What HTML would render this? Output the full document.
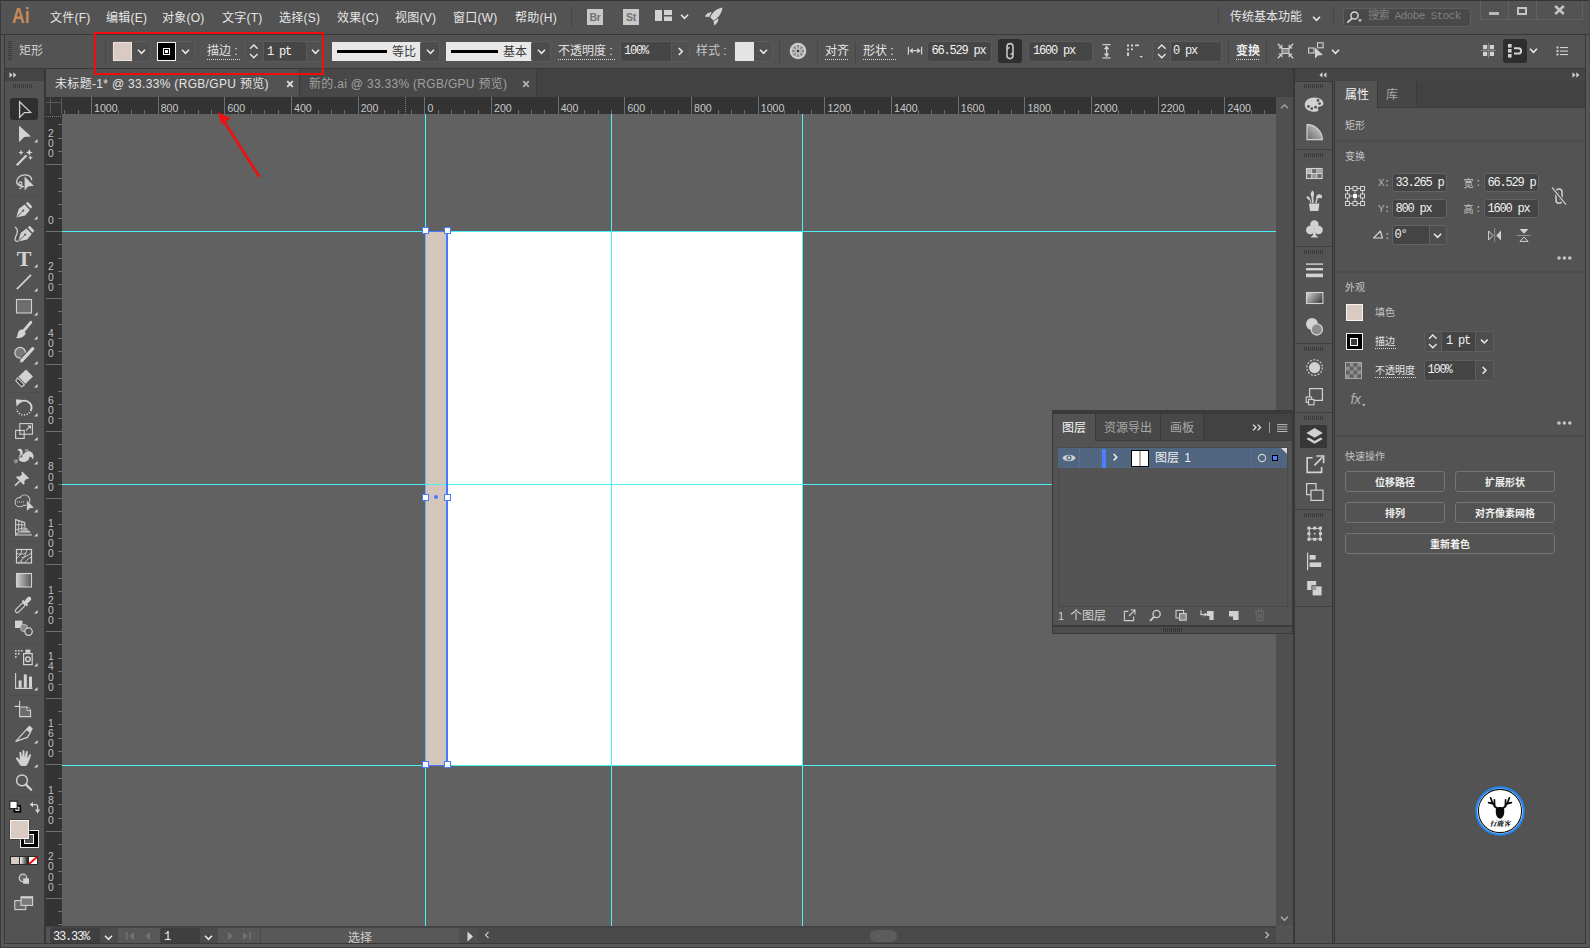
<!DOCTYPE html>
<html lang="zh-CN"><head><meta charset="utf-8"><title>Adobe Illustrator</title>
<style>
html,body{margin:0;padding:0;background:#575757;}
#app{position:relative;width:1590px;height:948px;overflow:hidden;font-family:'Liberation Sans','Noto Sans CJK SC',sans-serif;}
#app div,#app svg,#app span{position:absolute;}
#app svg{overflow:visible;}
</style></head><body><div id="app">
<div style="left:0px;top:0px;width:1590px;height:948px;background:#575757;"></div>
<div style="left:0px;top:0px;width:1590px;height:1px;background:#343434;"></div>
<div style="left:0px;top:0px;width:1px;height:948px;background:#3a3a3a;"></div>
<div style="left:0px;top:947px;width:1590px;height:1px;background:#3c3c3c;"></div>
<div style="left:1589px;top:0px;width:1px;height:948px;background:#4c4c4c;"></div>
<div style="left:1px;top:1px;width:1588px;height:33px;background:#535353;"></div>
<div style="left:1px;top:34px;width:1588px;height:1px;background:#383838;"></div>
<div style="left:5px;top:35px;width:1580px;height:33px;background:#535353;"></div>
<div style="left:4px;top:35px;width:1px;height:908px;background:#383838;"></div>
<div style="left:5px;top:68px;width:1580px;height:1px;background:#383838;"></div>
<div style="left:1585px;top:35px;width:1px;height:908px;background:#383838;"></div>
<div style="left:4px;top:943px;width:1582px;height:1px;background:#383838;"></div>
<div style="left:46px;top:69px;width:1247px;height:28px;background:#424242;"></div>
<div style="left:46px;top:69px;width:253px;height:28px;background:#535353;"></div>
<div style="left:299px;top:69px;width:1px;height:28px;background:#3a3a3a;"></div>
<div style="left:300px;top:69px;width:236px;height:28px;background:#484848;"></div>
<div style="left:536px;top:69px;width:1px;height:28px;background:#3a3a3a;"></div>
<span style="left:55px;top:75.50px;font:12px/16px 'Liberation Sans','Noto Sans CJK SC',sans-serif;color:#e4e4e4;white-space:pre;letter-spacing:0.32px;">未标题-1* @ 33.33% (RGB/GPU 预览)</span>
<span style="left:309px;top:75.50px;font:12px/16px 'Liberation Sans','Noto Sans CJK SC',sans-serif;color:#a0a0a0;white-space:pre;letter-spacing:0.3px;">新的.ai @ 33.33% (RGB/GPU 预览)</span>
<svg style="left:285.5px;top:79.5px;" width="8" height="8" viewBox="0 0 8 8"><path d="M1.2 1.2 L6.8 6.8 M6.8 1.2 L1.2 6.8" stroke="#e0e0e0" stroke-width="1.8"/></svg>
<svg style="left:522px;top:79.5px;" width="8" height="8" viewBox="0 0 8 8"><path d="M1.2 1.2 L6.8 6.8 M6.8 1.2 L1.2 6.8" stroke="#b0b0b0" stroke-width="1.8"/></svg>
<div style="left:46px;top:97px;width:1230px;height:17px;background:#333333;"></div>
<div style="left:46px;top:97px;width:16px;height:830px;background:#333333;"></div>
<div style="left:62px;top:114px;width:1214px;height:812px;background:#616161;"></div>
<svg style="left:46px;top:97px;" width="1230" height="17" viewBox="0 0 1230 17"><rect x="18" y="13" width="1" height="4" fill="#707070"/><rect x="32" y="13" width="1" height="4" fill="#707070"/><rect x="45" y="0" width="1" height="17" fill="#707070"/><text x="48.06" y="14.8" font-family="Liberation Sans,sans-serif" font-size="10.6" fill="#c8c8c8">1000</text><rect x="58" y="13" width="1" height="4" fill="#707070"/><rect x="72" y="13" width="1" height="4" fill="#707070"/><rect x="85" y="13" width="1" height="4" fill="#707070"/><rect x="98" y="13" width="1" height="4" fill="#707070"/><rect x="112" y="0" width="1" height="17" fill="#707070"/><text x="114.73" y="14.8" font-family="Liberation Sans,sans-serif" font-size="10.6" fill="#c8c8c8">800</text><rect x="125" y="13" width="1" height="4" fill="#707070"/><rect x="138" y="13" width="1" height="4" fill="#707070"/><rect x="152" y="13" width="1" height="4" fill="#707070"/><rect x="165" y="13" width="1" height="4" fill="#707070"/><rect x="178" y="0" width="1" height="17" fill="#707070"/><text x="181.40" y="14.8" font-family="Liberation Sans,sans-serif" font-size="10.6" fill="#c8c8c8">600</text><rect x="192" y="13" width="1" height="4" fill="#707070"/><rect x="205" y="13" width="1" height="4" fill="#707070"/><rect x="218" y="13" width="1" height="4" fill="#707070"/><rect x="232" y="13" width="1" height="4" fill="#707070"/><rect x="245" y="0" width="1" height="17" fill="#707070"/><text x="248.07" y="14.8" font-family="Liberation Sans,sans-serif" font-size="10.6" fill="#c8c8c8">400</text><rect x="258" y="13" width="1" height="4" fill="#707070"/><rect x="272" y="13" width="1" height="4" fill="#707070"/><rect x="285" y="13" width="1" height="4" fill="#707070"/><rect x="298" y="13" width="1" height="4" fill="#707070"/><rect x="312" y="0" width="1" height="17" fill="#707070"/><text x="314.73" y="14.8" font-family="Liberation Sans,sans-serif" font-size="10.6" fill="#c8c8c8">200</text><rect x="325" y="13" width="1" height="4" fill="#707070"/><rect x="338" y="13" width="1" height="4" fill="#707070"/><rect x="352" y="13" width="1" height="4" fill="#707070"/><rect x="365" y="13" width="1" height="4" fill="#707070"/><rect x="378" y="0" width="1" height="17" fill="#707070"/><text x="381.40" y="14.8" font-family="Liberation Sans,sans-serif" font-size="10.6" fill="#c8c8c8">0</text><rect x="392" y="13" width="1" height="4" fill="#707070"/><rect x="405" y="13" width="1" height="4" fill="#707070"/><rect x="418" y="13" width="1" height="4" fill="#707070"/><rect x="432" y="13" width="1" height="4" fill="#707070"/><rect x="445" y="0" width="1" height="17" fill="#707070"/><text x="448.07" y="14.8" font-family="Liberation Sans,sans-serif" font-size="10.6" fill="#c8c8c8">200</text><rect x="458" y="13" width="1" height="4" fill="#707070"/><rect x="472" y="13" width="1" height="4" fill="#707070"/><rect x="485" y="13" width="1" height="4" fill="#707070"/><rect x="498" y="13" width="1" height="4" fill="#707070"/><rect x="512" y="0" width="1" height="17" fill="#707070"/><text x="514.73" y="14.8" font-family="Liberation Sans,sans-serif" font-size="10.6" fill="#c8c8c8">400</text><rect x="525" y="13" width="1" height="4" fill="#707070"/><rect x="538" y="13" width="1" height="4" fill="#707070"/><rect x="552" y="13" width="1" height="4" fill="#707070"/><rect x="565" y="13" width="1" height="4" fill="#707070"/><rect x="578" y="0" width="1" height="17" fill="#707070"/><text x="581.40" y="14.8" font-family="Liberation Sans,sans-serif" font-size="10.6" fill="#c8c8c8">600</text><rect x="592" y="13" width="1" height="4" fill="#707070"/><rect x="605" y="13" width="1" height="4" fill="#707070"/><rect x="618" y="13" width="1" height="4" fill="#707070"/><rect x="632" y="13" width="1" height="4" fill="#707070"/><rect x="645" y="0" width="1" height="17" fill="#707070"/><text x="648.07" y="14.8" font-family="Liberation Sans,sans-serif" font-size="10.6" fill="#c8c8c8">800</text><rect x="658" y="13" width="1" height="4" fill="#707070"/><rect x="672" y="13" width="1" height="4" fill="#707070"/><rect x="685" y="13" width="1" height="4" fill="#707070"/><rect x="698" y="13" width="1" height="4" fill="#707070"/><rect x="712" y="0" width="1" height="17" fill="#707070"/><text x="714.74" y="14.8" font-family="Liberation Sans,sans-serif" font-size="10.6" fill="#c8c8c8">1000</text><rect x="725" y="13" width="1" height="4" fill="#707070"/><rect x="738" y="13" width="1" height="4" fill="#707070"/><rect x="752" y="13" width="1" height="4" fill="#707070"/><rect x="765" y="13" width="1" height="4" fill="#707070"/><rect x="778" y="0" width="1" height="17" fill="#707070"/><text x="781.40" y="14.8" font-family="Liberation Sans,sans-serif" font-size="10.6" fill="#c8c8c8">1200</text><rect x="792" y="13" width="1" height="4" fill="#707070"/><rect x="805" y="13" width="1" height="4" fill="#707070"/><rect x="818" y="13" width="1" height="4" fill="#707070"/><rect x="832" y="13" width="1" height="4" fill="#707070"/><rect x="845" y="0" width="1" height="17" fill="#707070"/><text x="848.07" y="14.8" font-family="Liberation Sans,sans-serif" font-size="10.6" fill="#c8c8c8">1400</text><rect x="858" y="13" width="1" height="4" fill="#707070"/><rect x="872" y="13" width="1" height="4" fill="#707070"/><rect x="885" y="13" width="1" height="4" fill="#707070"/><rect x="898" y="13" width="1" height="4" fill="#707070"/><rect x="912" y="0" width="1" height="17" fill="#707070"/><text x="914.74" y="14.8" font-family="Liberation Sans,sans-serif" font-size="10.6" fill="#c8c8c8">1600</text><rect x="925" y="13" width="1" height="4" fill="#707070"/><rect x="938" y="13" width="1" height="4" fill="#707070"/><rect x="952" y="13" width="1" height="4" fill="#707070"/><rect x="965" y="13" width="1" height="4" fill="#707070"/><rect x="978" y="0" width="1" height="17" fill="#707070"/><text x="981.40" y="14.8" font-family="Liberation Sans,sans-serif" font-size="10.6" fill="#c8c8c8">1800</text><rect x="992" y="13" width="1" height="4" fill="#707070"/><rect x="1005" y="13" width="1" height="4" fill="#707070"/><rect x="1018" y="13" width="1" height="4" fill="#707070"/><rect x="1032" y="13" width="1" height="4" fill="#707070"/><rect x="1045" y="0" width="1" height="17" fill="#707070"/><text x="1048.07" y="14.8" font-family="Liberation Sans,sans-serif" font-size="10.6" fill="#c8c8c8">2000</text><rect x="1058" y="13" width="1" height="4" fill="#707070"/><rect x="1072" y="13" width="1" height="4" fill="#707070"/><rect x="1085" y="13" width="1" height="4" fill="#707070"/><rect x="1098" y="13" width="1" height="4" fill="#707070"/><rect x="1112" y="0" width="1" height="17" fill="#707070"/><text x="1114.74" y="14.8" font-family="Liberation Sans,sans-serif" font-size="10.6" fill="#c8c8c8">2200</text><rect x="1125" y="13" width="1" height="4" fill="#707070"/><rect x="1138" y="13" width="1" height="4" fill="#707070"/><rect x="1152" y="13" width="1" height="4" fill="#707070"/><rect x="1165" y="13" width="1" height="4" fill="#707070"/><rect x="1178" y="0" width="1" height="17" fill="#707070"/><text x="1181.40" y="14.8" font-family="Liberation Sans,sans-serif" font-size="10.6" fill="#c8c8c8">2400</text><rect x="1192" y="13" width="1" height="4" fill="#707070"/><rect x="1205" y="13" width="1" height="4" fill="#707070"/><rect x="1218" y="13" width="1" height="4" fill="#707070"/><rect x="4" y="1" width="1" height="16" fill="#585858"/><rect x="15" y="1" width="1" height="16" fill="#585858"/><rect x="0" y="5" width="16" height="1" fill="#585858"/><path d="M359.5 0 V17" stroke="#7c7c7c" stroke-width="1" stroke-dasharray="1 1"/></svg>
<svg style="left:46px;top:114px;" width="16" height="813" viewBox="0 0 16 813"><rect x="12" y="10" width="4" height="1" fill="#707070"/><rect x="12" y="24" width="4" height="1" fill="#707070"/><rect x="12" y="37" width="4" height="1" fill="#707070"/><rect x="0" y="50" width="16" height="1" fill="#707070"/><text x="4.8" y="23.03" text-anchor="middle" font-family="Liberation Sans,sans-serif" font-size="10.3" fill="#c0c0c0">2</text><text x="4.8" y="33.23" text-anchor="middle" font-family="Liberation Sans,sans-serif" font-size="10.3" fill="#c0c0c0">0</text><text x="4.8" y="43.43" text-anchor="middle" font-family="Liberation Sans,sans-serif" font-size="10.3" fill="#c0c0c0">0</text><rect x="12" y="64" width="4" height="1" fill="#707070"/><rect x="12" y="77" width="4" height="1" fill="#707070"/><rect x="12" y="90" width="4" height="1" fill="#707070"/><rect x="12" y="104" width="4" height="1" fill="#707070"/><rect x="0" y="117" width="16" height="1" fill="#707070"/><text x="4.8" y="110.10" text-anchor="middle" font-family="Liberation Sans,sans-serif" font-size="10.3" fill="#c0c0c0">0</text><rect x="12" y="130" width="4" height="1" fill="#707070"/><rect x="12" y="144" width="4" height="1" fill="#707070"/><rect x="12" y="157" width="4" height="1" fill="#707070"/><rect x="12" y="170" width="4" height="1" fill="#707070"/><rect x="0" y="184" width="16" height="1" fill="#707070"/><text x="4.8" y="156.37" text-anchor="middle" font-family="Liberation Sans,sans-serif" font-size="10.3" fill="#c0c0c0">2</text><text x="4.8" y="166.57" text-anchor="middle" font-family="Liberation Sans,sans-serif" font-size="10.3" fill="#c0c0c0">0</text><text x="4.8" y="176.77" text-anchor="middle" font-family="Liberation Sans,sans-serif" font-size="10.3" fill="#c0c0c0">0</text><rect x="12" y="197" width="4" height="1" fill="#707070"/><rect x="12" y="210" width="4" height="1" fill="#707070"/><rect x="12" y="224" width="4" height="1" fill="#707070"/><rect x="12" y="237" width="4" height="1" fill="#707070"/><rect x="0" y="250" width="16" height="1" fill="#707070"/><text x="4.8" y="223.03" text-anchor="middle" font-family="Liberation Sans,sans-serif" font-size="10.3" fill="#c0c0c0">4</text><text x="4.8" y="233.23" text-anchor="middle" font-family="Liberation Sans,sans-serif" font-size="10.3" fill="#c0c0c0">0</text><text x="4.8" y="243.43" text-anchor="middle" font-family="Liberation Sans,sans-serif" font-size="10.3" fill="#c0c0c0">0</text><rect x="12" y="264" width="4" height="1" fill="#707070"/><rect x="12" y="277" width="4" height="1" fill="#707070"/><rect x="12" y="290" width="4" height="1" fill="#707070"/><rect x="12" y="304" width="4" height="1" fill="#707070"/><rect x="0" y="317" width="16" height="1" fill="#707070"/><text x="4.8" y="289.70" text-anchor="middle" font-family="Liberation Sans,sans-serif" font-size="10.3" fill="#c0c0c0">6</text><text x="4.8" y="299.90" text-anchor="middle" font-family="Liberation Sans,sans-serif" font-size="10.3" fill="#c0c0c0">0</text><text x="4.8" y="310.10" text-anchor="middle" font-family="Liberation Sans,sans-serif" font-size="10.3" fill="#c0c0c0">0</text><rect x="12" y="330" width="4" height="1" fill="#707070"/><rect x="12" y="344" width="4" height="1" fill="#707070"/><rect x="12" y="357" width="4" height="1" fill="#707070"/><rect x="12" y="370" width="4" height="1" fill="#707070"/><rect x="0" y="384" width="16" height="1" fill="#707070"/><text x="4.8" y="356.37" text-anchor="middle" font-family="Liberation Sans,sans-serif" font-size="10.3" fill="#c0c0c0">8</text><text x="4.8" y="366.57" text-anchor="middle" font-family="Liberation Sans,sans-serif" font-size="10.3" fill="#c0c0c0">0</text><text x="4.8" y="376.77" text-anchor="middle" font-family="Liberation Sans,sans-serif" font-size="10.3" fill="#c0c0c0">0</text><rect x="12" y="397" width="4" height="1" fill="#707070"/><rect x="12" y="410" width="4" height="1" fill="#707070"/><rect x="12" y="424" width="4" height="1" fill="#707070"/><rect x="12" y="437" width="4" height="1" fill="#707070"/><rect x="0" y="450" width="16" height="1" fill="#707070"/><text x="4.8" y="412.84" text-anchor="middle" font-family="Liberation Sans,sans-serif" font-size="10.3" fill="#c0c0c0">1</text><text x="4.8" y="423.04" text-anchor="middle" font-family="Liberation Sans,sans-serif" font-size="10.3" fill="#c0c0c0">0</text><text x="4.8" y="433.24" text-anchor="middle" font-family="Liberation Sans,sans-serif" font-size="10.3" fill="#c0c0c0">0</text><text x="4.8" y="443.44" text-anchor="middle" font-family="Liberation Sans,sans-serif" font-size="10.3" fill="#c0c0c0">0</text><rect x="12" y="464" width="4" height="1" fill="#707070"/><rect x="12" y="477" width="4" height="1" fill="#707070"/><rect x="12" y="490" width="4" height="1" fill="#707070"/><rect x="12" y="504" width="4" height="1" fill="#707070"/><rect x="0" y="517" width="16" height="1" fill="#707070"/><text x="4.8" y="479.50" text-anchor="middle" font-family="Liberation Sans,sans-serif" font-size="10.3" fill="#c0c0c0">1</text><text x="4.8" y="489.70" text-anchor="middle" font-family="Liberation Sans,sans-serif" font-size="10.3" fill="#c0c0c0">2</text><text x="4.8" y="499.90" text-anchor="middle" font-family="Liberation Sans,sans-serif" font-size="10.3" fill="#c0c0c0">0</text><text x="4.8" y="510.10" text-anchor="middle" font-family="Liberation Sans,sans-serif" font-size="10.3" fill="#c0c0c0">0</text><rect x="12" y="530" width="4" height="1" fill="#707070"/><rect x="12" y="544" width="4" height="1" fill="#707070"/><rect x="12" y="557" width="4" height="1" fill="#707070"/><rect x="12" y="570" width="4" height="1" fill="#707070"/><rect x="0" y="584" width="16" height="1" fill="#707070"/><text x="4.8" y="546.17" text-anchor="middle" font-family="Liberation Sans,sans-serif" font-size="10.3" fill="#c0c0c0">1</text><text x="4.8" y="556.37" text-anchor="middle" font-family="Liberation Sans,sans-serif" font-size="10.3" fill="#c0c0c0">4</text><text x="4.8" y="566.57" text-anchor="middle" font-family="Liberation Sans,sans-serif" font-size="10.3" fill="#c0c0c0">0</text><text x="4.8" y="576.77" text-anchor="middle" font-family="Liberation Sans,sans-serif" font-size="10.3" fill="#c0c0c0">0</text><rect x="12" y="597" width="4" height="1" fill="#707070"/><rect x="12" y="610" width="4" height="1" fill="#707070"/><rect x="12" y="624" width="4" height="1" fill="#707070"/><rect x="12" y="637" width="4" height="1" fill="#707070"/><rect x="0" y="650" width="16" height="1" fill="#707070"/><text x="4.8" y="612.84" text-anchor="middle" font-family="Liberation Sans,sans-serif" font-size="10.3" fill="#c0c0c0">1</text><text x="4.8" y="623.04" text-anchor="middle" font-family="Liberation Sans,sans-serif" font-size="10.3" fill="#c0c0c0">6</text><text x="4.8" y="633.24" text-anchor="middle" font-family="Liberation Sans,sans-serif" font-size="10.3" fill="#c0c0c0">0</text><text x="4.8" y="643.44" text-anchor="middle" font-family="Liberation Sans,sans-serif" font-size="10.3" fill="#c0c0c0">0</text><rect x="12" y="664" width="4" height="1" fill="#707070"/><rect x="12" y="677" width="4" height="1" fill="#707070"/><rect x="12" y="690" width="4" height="1" fill="#707070"/><rect x="12" y="704" width="4" height="1" fill="#707070"/><rect x="0" y="717" width="16" height="1" fill="#707070"/><text x="4.8" y="679.50" text-anchor="middle" font-family="Liberation Sans,sans-serif" font-size="10.3" fill="#c0c0c0">1</text><text x="4.8" y="689.70" text-anchor="middle" font-family="Liberation Sans,sans-serif" font-size="10.3" fill="#c0c0c0">8</text><text x="4.8" y="699.90" text-anchor="middle" font-family="Liberation Sans,sans-serif" font-size="10.3" fill="#c0c0c0">0</text><text x="4.8" y="710.10" text-anchor="middle" font-family="Liberation Sans,sans-serif" font-size="10.3" fill="#c0c0c0">0</text><rect x="12" y="730" width="4" height="1" fill="#707070"/><rect x="12" y="744" width="4" height="1" fill="#707070"/><rect x="12" y="757" width="4" height="1" fill="#707070"/><rect x="12" y="770" width="4" height="1" fill="#707070"/><rect x="0" y="784" width="16" height="1" fill="#707070"/><text x="4.8" y="746.17" text-anchor="middle" font-family="Liberation Sans,sans-serif" font-size="10.3" fill="#c0c0c0">2</text><text x="4.8" y="756.37" text-anchor="middle" font-family="Liberation Sans,sans-serif" font-size="10.3" fill="#c0c0c0">0</text><text x="4.8" y="766.57" text-anchor="middle" font-family="Liberation Sans,sans-serif" font-size="10.3" fill="#c0c0c0">0</text><text x="4.8" y="776.77" text-anchor="middle" font-family="Liberation Sans,sans-serif" font-size="10.3" fill="#c0c0c0">0</text><rect x="12" y="797" width="4" height="1" fill="#707070"/><rect x="12" y="810" width="4" height="1" fill="#707070"/><path d="M0 2.5 H16" stroke="#7c7c7c" stroke-width="1" stroke-dasharray="1 1"/></svg>
<div style="left:425px;top:231px;width:377px;height:534px;background:#ffffff;"></div>
<div style="left:425px;top:231px;width:22px;height:534px;background:#d5c6bc;"></div>
<div style="left:425px;top:114px;width:1px;height:812px;background:#4cf1f6;"></div>
<div style="left:611px;top:114px;width:1px;height:812px;background:#4cf1f6;"></div>
<div style="left:802px;top:114px;width:1px;height:812px;background:#4cf1f6;"></div>
<div style="left:62px;top:231px;width:1214px;height:1px;background:#4cf1f6;"></div>
<div style="left:62px;top:484px;width:1214px;height:1px;background:#4cf1f6;"></div>
<div style="left:62px;top:765px;width:1214px;height:1px;background:#4cf1f6;"></div>
<div style="left:424.5px;top:230.5px;width:23px;height:535px;background:transparent;box-sizing:border-box;border:1px solid #4a78ff;border-left-color:#66b6ff;"></div>
<div style="left:446px;top:231px;width:2px;height:534px;background:#4a78ff;"></div>
<div style="left:422.0px;top:227.0px;width:7px;height:7px;background:#ffffff;box-sizing:border-box;border:1px solid #4a78ff;"></div>
<div style="left:422.0px;top:493.5px;width:7px;height:7px;background:#ffffff;box-sizing:border-box;border:1px solid #4a78ff;"></div>
<div style="left:422.0px;top:761.0px;width:7px;height:7px;background:#ffffff;box-sizing:border-box;border:1px solid #4a78ff;"></div>
<div style="left:443.5px;top:227.0px;width:7px;height:7px;background:#ffffff;box-sizing:border-box;border:1px solid #4a78ff;"></div>
<div style="left:443.5px;top:493.5px;width:7px;height:7px;background:#ffffff;box-sizing:border-box;border:1px solid #4a78ff;"></div>
<div style="left:443.5px;top:761.0px;width:7px;height:7px;background:#ffffff;box-sizing:border-box;border:1px solid #4a78ff;"></div>
<div style="left:433.5px;top:495px;width:4px;height:4px;background:#4a78ff;border-radius:2px;"></div>
<div style="left:1276px;top:97px;width:17px;height:830px;background:#4f4f4f;"></div>
<svg style="left:1280.0px;top:103.0px;" width="9.0" height="7.0" viewBox="0 0 9.0 7.0"><path d="M1 5.25 L4.5 1.75 L8.0 5.25" fill="none" stroke="#a2a2a2" stroke-width="1.3"/></svg>
<svg style="left:1280.0px;top:914.5px;" width="9.0" height="7.0" viewBox="0 0 9.0 7.0"><path d="M1 1.75 L4.5 5.25 L8.0 1.75" fill="none" stroke="#b0b0b0" stroke-width="1.3"/></svg>
<div style="left:1293px;top:69px;width:2px;height:874px;background:#383838;"></div>
<div style="left:46px;top:926px;width:1247px;height:17px;background:#585858;"></div>
<div style="left:46px;top:926px;width:1230px;height:1.5px;background:#444;"></div>
<div style="left:46px;top:927px;width:4px;height:16px;background:#535353;"></div>
<div style="left:50px;top:928px;width:50px;height:15px;background:#3f3f3f;border-radius:2px 0 0 2px;"></div>
<span style="left:53px;top:928.50px;font:12px/16px 'Liberation Mono','Noto Sans CJK SC',monospace;color:#f0f0f0;white-space:pre;letter-spacing:-1.2px;">33.33%</span>
<div style="left:100px;top:928px;width:18px;height:15px;background:#4b4b4b;"></div>
<svg style="left:104.0px;top:933.5px;" width="9.0" height="7.0" viewBox="0 0 9.0 7.0"><path d="M1 1.75 L4.5 5.25 L8.0 1.75" fill="none" stroke="#e6e6e6" stroke-width="1.6"/></svg>
<div style="left:160px;top:928px;width:40px;height:15px;background:#3f3f3f;border-radius:2px 0 0 2px;"></div>
<span style="left:164px;top:928.50px;font:12px/16px 'Liberation Mono','Noto Sans CJK SC',monospace;color:#f0f0f0;white-space:pre;">1</span>
<div style="left:200px;top:928px;width:18px;height:15px;background:#4b4b4b;"></div>
<svg style="left:204.0px;top:933.5px;" width="9.0" height="7.0" viewBox="0 0 9.0 7.0"><path d="M1 1.75 L4.5 5.25 L8.0 1.75" fill="none" stroke="#e6e6e6" stroke-width="1.6"/></svg>
<svg style="left:125px;top:931px;" width="12" height="10" viewBox="0 0 12 10"><rect x="1" y="1" width="1.5" height="8" fill="#727272"/><path d="M9 1 L4 5 L9 9 Z" fill="#727272"/></svg>
<svg style="left:143px;top:931px;" width="10" height="10" viewBox="0 0 10 10"><path d="M7 1 L2 5 L7 9 Z" fill="#727272"/></svg>
<svg style="left:225px;top:931px;" width="10" height="10" viewBox="0 0 10 10"><path d="M3 1 L8 5 L3 9 Z" fill="#727272"/></svg>
<svg style="left:241px;top:931px;" width="12" height="10" viewBox="0 0 12 10"><path d="M2 1 L7 5 L2 9 Z" fill="#727272"/><rect x="8.5" y="1" width="1.5" height="8" fill="#727272"/></svg>
<div style="left:260px;top:928px;width:1px;height:15px;background:#4a4a4a;"></div>
<span style="left:348px;top:929.50px;font:12px/16px 'Liberation Sans','Noto Sans CJK SC',sans-serif;color:#d0d0d0;white-space:pre;">选择</span>
<div style="left:459px;top:928px;width:19px;height:15px;background:#4f4f4f;"></div>
<svg style="left:464.5px;top:930.5px;" width="10" height="11" viewBox="0 0 10 11"><path d="M2.5 0.5 L8 5.5 L2.5 10.5 Z" fill="#d8d8d8"/></svg>
<div style="left:478px;top:927.5px;width:798px;height:15.5px;background:#4a4a4a;"></div>
<svg style="left:483.5px;top:931px;" width="6" height="8" viewBox="0 0 6 8"><path d="M4.50 1 L1.50 4 L4.50 7" fill="none" stroke="#bdbdbd" stroke-width="1.3"/></svg>
<svg style="left:1264px;top:931px;" width="6" height="8" viewBox="0 0 6 8"><path d="M1.50 1 L4.50 4 L1.50 7" fill="none" stroke="#bdbdbd" stroke-width="1.3"/></svg>
<div style="left:870px;top:929.5px;width:27px;height:12px;background:#5c5c5c;border-radius:6px;"></div>
<div style="left:1276px;top:927px;width:17px;height:16px;background:#535353;"></div>
<span style="left:12.4px;top:2.90px;font:22px/26px 'Liberation Sans','Noto Sans CJK SC',sans-serif;color:#c48a5a;white-space:pre;font-weight:bold;transform:scaleX(0.8);transform-origin:0 50%;">Ai</span>
<span style="left:50px;top:10.00px;font:12px/16px 'Liberation Sans','Noto Sans CJK SC',sans-serif;color:#e6e6e6;white-space:pre;letter-spacing:0.25px;">文件(F)</span>
<span style="left:106px;top:10.00px;font:12px/16px 'Liberation Sans','Noto Sans CJK SC',sans-serif;color:#e6e6e6;white-space:pre;letter-spacing:0.25px;">编辑(E)</span>
<span style="left:162px;top:10.00px;font:12px/16px 'Liberation Sans','Noto Sans CJK SC',sans-serif;color:#e6e6e6;white-space:pre;letter-spacing:0.25px;">对象(O)</span>
<span style="left:222px;top:10.00px;font:12px/16px 'Liberation Sans','Noto Sans CJK SC',sans-serif;color:#e6e6e6;white-space:pre;letter-spacing:0.25px;">文字(T)</span>
<span style="left:279px;top:10.00px;font:12px/16px 'Liberation Sans','Noto Sans CJK SC',sans-serif;color:#e6e6e6;white-space:pre;letter-spacing:0.25px;">选择(S)</span>
<span style="left:337px;top:10.00px;font:12px/16px 'Liberation Sans','Noto Sans CJK SC',sans-serif;color:#e6e6e6;white-space:pre;letter-spacing:0.25px;">效果(C)</span>
<span style="left:395px;top:10.00px;font:12px/16px 'Liberation Sans','Noto Sans CJK SC',sans-serif;color:#e6e6e6;white-space:pre;letter-spacing:0.25px;">视图(V)</span>
<span style="left:453px;top:10.00px;font:12px/16px 'Liberation Sans','Noto Sans CJK SC',sans-serif;color:#e6e6e6;white-space:pre;letter-spacing:0.25px;">窗口(W)</span>
<span style="left:515px;top:10.00px;font:12px/16px 'Liberation Sans','Noto Sans CJK SC',sans-serif;color:#e6e6e6;white-space:pre;letter-spacing:0.25px;">帮助(H)</span>
<div style="left:571px;top:7px;width:1px;height:20px;background:#474747;"></div>
<div style="left:587px;top:9px;width:16px;height:16px;background:#c9c9c9;"></div>
<span style="left:587px;top:10.25px;font:10.5px/14.5px 'Liberation Sans','Noto Sans CJK SC',sans-serif;color:#727272;white-space:pre;width:16px;text-align:center;font-weight:bold;letter-spacing:-0.3px;">Br</span>
<div style="left:623px;top:9px;width:16px;height:16px;background:#c9c9c9;"></div>
<span style="left:623px;top:10.25px;font:10.5px/14.5px 'Liberation Sans','Noto Sans CJK SC',sans-serif;color:#727272;white-space:pre;width:16px;text-align:center;font-weight:bold;letter-spacing:-0.3px;">St</span>
<svg style="left:655px;top:10px;" width="18" height="12" viewBox="0 0 18 12"><rect x="0" y="0" width="7" height="11" fill="#d2d2d2"/><rect x="9" y="0" width="8" height="5" fill="#d2d2d2"/><rect x="9" y="6.5" width="8" height="4.5" fill="#d2d2d2"/></svg>
<svg style="left:680.0px;top:12.5px;" width="9.0" height="7.0" viewBox="0 0 9.0 7.0"><path d="M1 1.75 L4.5 5.25 L8.0 1.75" fill="none" stroke="#e6e6e6" stroke-width="1.6"/></svg>
<svg style="left:704px;top:7px;" width="20" height="19" viewBox="0 0 20 19"><path d="M18.6 0.6 C13 1.6 8.6 5 6.2 10.2 L9.4 13.6 C14.4 11 17.8 6.4 18.6 0.6 Z" fill="#d2d2d2"/><path d="M7.8 5.2 C5 5 2.4 6.6 0.8 9.4 L5 10 Z" fill="#d2d2d2"/><path d="M14.4 11.2 C14.6 14 13 16.6 10.2 18.4 L9.6 14.2 Z" fill="#d2d2d2"/></svg>
<div style="left:1218px;top:7px;width:1px;height:20px;background:#474747;"></div>
<span style="left:1230px;top:8.50px;font:12px/16px 'Liberation Sans','Noto Sans CJK SC',sans-serif;color:#e6e6e6;white-space:pre;">传统基本功能</span>
<svg style="left:1311.5px;top:14.5px;" width="9.0" height="7.0" viewBox="0 0 9.0 7.0"><path d="M1 1.75 L4.5 5.25 L8.0 1.75" fill="none" stroke="#e6e6e6" stroke-width="1.6"/></svg>
<div style="left:1333px;top:7px;width:1px;height:20px;background:#474747;"></div>
<div style="left:1343px;top:8px;width:128px;height:19px;background:#494949;box-sizing:border-box;border:1px solid #5e5e5e;border-radius:3px;"></div>
<svg style="left:1346px;top:10px;" width="18" height="15" viewBox="0 0 18 15"><circle cx="8.5" cy="5.5" r="3.6" fill="none" stroke="#d6d6d6" stroke-width="1.5"/><path d="M6 8.3 L1.3 12.6" stroke="#d6d6d6" stroke-width="1.7"/><path d="M11.8 9.5 h4.4 l-2.2 2.4 z" fill="#d6d6d6"/></svg>
<span style="left:1368px;top:9.00px;font:11px/15px 'Liberation Mono','Noto Sans CJK SC',monospace;color:#808080;white-space:pre;letter-spacing:-0.6px;">搜索 Adobe Stock</span>
<div style="left:1480px;top:1px;width:103px;height:19px;background:transparent;box-sizing:border-box;border:1px solid #606060;border-top:none;"></div>
<div style="left:1508px;top:1px;width:1px;height:18px;background:#606060;"></div>
<div style="left:1536px;top:1px;width:1px;height:18px;background:#606060;"></div>
<div style="left:1489px;top:11.5px;width:10px;height:3px;background:#b8b8b8;"></div>
<div style="left:1517px;top:7px;width:10px;height:8px;background:transparent;box-sizing:border-box;border:2px solid #c4c4c4;"></div>
<svg style="left:1554px;top:5px;" width="11" height="10" viewBox="0 0 11 10"><path d="M1.2 1 L9.8 9 M9.8 1 L1.2 9" stroke="#c4c4c4" stroke-width="2.4"/></svg>
<svg style="left:8px;top:41px;" width="4" height="20" viewBox="0 0 4 20"><rect x="0" y="0" width="4" height="1" fill="#3c3c3c"/><rect x="0" y="2" width="4" height="1" fill="#3c3c3c"/><rect x="0" y="4" width="4" height="1" fill="#3c3c3c"/><rect x="0" y="6" width="4" height="1" fill="#3c3c3c"/><rect x="0" y="8" width="4" height="1" fill="#3c3c3c"/><rect x="0" y="10" width="4" height="1" fill="#3c3c3c"/><rect x="0" y="12" width="4" height="1" fill="#3c3c3c"/><rect x="0" y="14" width="4" height="1" fill="#3c3c3c"/><rect x="0" y="16" width="4" height="1" fill="#3c3c3c"/><rect x="0" y="18" width="4" height="1" fill="#3c3c3c"/></svg>
<span style="left:19px;top:43.00px;font:12px/16px 'Liberation Sans','Noto Sans CJK SC',sans-serif;color:#d2d2d2;white-space:pre;">矩形</span>
<div style="left:105px;top:40px;width:1px;height:23px;background:#474747;"></div>
<div style="left:112px;top:41px;width:39px;height:21px;background:#505050;box-sizing:border-box;border:1px solid #5b5b5b;border-radius:3px;"></div>
<div style="left:113px;top:42px;width:19px;height:19px;background:#d9cbc1;box-sizing:border-box;border:1px solid #e9e2dc;"></div>
<svg style="left:137.0px;top:48.0px;" width="9.0" height="7.0" viewBox="0 0 9.0 7.0"><path d="M1 1.75 L4.5 5.25 L8.0 1.75" fill="none" stroke="#e6e6e6" stroke-width="1.6"/></svg>
<div style="left:156px;top:41px;width:39px;height:21px;background:#505050;box-sizing:border-box;border:1px solid #5b5b5b;border-radius:3px;"></div>
<div style="left:157px;top:42px;width:19px;height:19px;background:#000;box-sizing:border-box;border:1px solid #f4f4f4;"></div>
<div style="left:163px;top:48px;width:7px;height:7px;background:transparent;box-sizing:border-box;border:1px solid #fff;"></div>
<div style="left:165px;top:50px;width:3px;height:3px;background:#ffffff;"></div>
<svg style="left:181.0px;top:48.0px;" width="9.0" height="7.0" viewBox="0 0 9.0 7.0"><path d="M1 1.75 L4.5 5.25 L8.0 1.75" fill="none" stroke="#e6e6e6" stroke-width="1.6"/></svg>
<span style="left:207px;top:43.00px;font:12px/16px 'Liberation Sans','Noto Sans CJK SC',sans-serif;color:#e0e0e0;white-space:pre;">描边 :</span>
<div style="left:207px;top:59px;width:33px;height:1px;background:repeating-linear-gradient(90deg,#d8d8d8 0 1px,transparent 1px 2px);"></div>
<div style="left:245px;top:41px;width:79px;height:21px;background:#505050;box-sizing:border-box;border:1px solid #5b5b5b;border-radius:3px;"></div>
<div style="left:263px;top:42px;width:43px;height:19px;background:#464646;"></div>
<div style="left:263px;top:42px;width:1px;height:19px;background:#5b5b5b;"></div>
<div style="left:306px;top:42px;width:1px;height:19px;background:#5b5b5b;"></div>
<svg style="left:249.2px;top:43.0px;" width="9.6" height="7.6" viewBox="0 0 9.6 7.6"><path d="M1 5.70 L4.8 1.90 L8.6 5.70" fill="none" stroke="#e6e6e6" stroke-width="1.4"/></svg>
<svg style="left:249.2px;top:52.400000000000006px;" width="9.6" height="7.6" viewBox="0 0 9.6 7.6"><path d="M1 1.90 L4.8 5.70 L8.6 1.90" fill="none" stroke="#e6e6e6" stroke-width="1.4"/></svg>
<span style="left:267px;top:43.80px;font:12px/16px 'Liberation Mono','Noto Sans CJK SC',monospace;color:#f2f2f2;white-space:pre;letter-spacing:-1.2px;">1 pt</span>
<svg style="left:310.5px;top:48.0px;" width="9.0" height="7.0" viewBox="0 0 9.0 7.0"><path d="M1 1.75 L4.5 5.25 L8.0 1.75" fill="none" stroke="#e6e6e6" stroke-width="1.6"/></svg>
<div style="left:332px;top:42px;width:89px;height:19px;background:#e8e8e8;"></div>
<div style="left:337px;top:50px;width:50px;height:3px;background:#000;"></div>
<span style="left:392px;top:43.50px;font:12px/16px 'Liberation Sans','Noto Sans CJK SC',sans-serif;color:#3c3c3c;white-space:pre;">等比</span>
<div style="left:420px;top:41px;width:20px;height:21px;background:#4c4c4c;box-sizing:border-box;border:1px solid #5b5b5b;border-radius:3px;"></div>
<svg style="left:425.5px;top:48.0px;" width="9.0" height="7.0" viewBox="0 0 9.0 7.0"><path d="M1 1.75 L4.5 5.25 L8.0 1.75" fill="none" stroke="#e6e6e6" stroke-width="1.6"/></svg>
<div style="left:446px;top:42px;width:86px;height:19px;background:#e8e8e8;"></div>
<div style="left:451px;top:50px;width:47px;height:3px;background:#000;"></div>
<span style="left:503px;top:43.50px;font:12px/16px 'Liberation Sans','Noto Sans CJK SC',sans-serif;color:#3c3c3c;white-space:pre;">基本</span>
<div style="left:531px;top:41px;width:20px;height:21px;background:#4c4c4c;box-sizing:border-box;border:1px solid #5b5b5b;border-radius:3px;"></div>
<svg style="left:536.5px;top:48.0px;" width="9.0" height="7.0" viewBox="0 0 9.0 7.0"><path d="M1 1.75 L4.5 5.25 L8.0 1.75" fill="none" stroke="#e6e6e6" stroke-width="1.6"/></svg>
<span style="left:558px;top:43.00px;font:12px/16px 'Liberation Sans','Noto Sans CJK SC',sans-serif;color:#e0e0e0;white-space:pre;">不透明度 :</span>
<div style="left:558px;top:59px;width:57px;height:1px;background:repeating-linear-gradient(90deg,#d8d8d8 0 1px,transparent 1px 2px);"></div>
<div style="left:620px;top:41px;width:70px;height:21px;background:#464646;box-sizing:border-box;border:1px solid #5b5b5b;border-radius:3px;"></div>
<div style="left:671px;top:42px;width:18px;height:19px;background:#505050;"></div>
<div style="left:671px;top:42px;width:1px;height:19px;background:#5b5b5b;"></div>
<span style="left:624px;top:43.30px;font:12px/16px 'Liberation Mono','Noto Sans CJK SC',monospace;color:#f2f2f2;white-space:pre;letter-spacing:-1.2px;">100%</span>
<svg style="left:676.5px;top:47.0px;" width="7.0" height="9.0" viewBox="0 0 7.0 9.0"><path d="M1.75 1 L5.25 4.5 L1.75 8.0" fill="none" stroke="#e6e6e6" stroke-width="1.6"/></svg>
<span style="left:696px;top:43.00px;font:12px/16px 'Liberation Sans','Noto Sans CJK SC',sans-serif;color:#c6c6c6;white-space:pre;">样式 :</span>
<div style="left:734px;top:41px;width:39px;height:21px;background:#505050;box-sizing:border-box;border:1px solid #5b5b5b;border-radius:3px;"></div>
<div style="left:735px;top:42px;width:19px;height:19px;background:#e4e4e4;"></div>
<svg style="left:759.0px;top:48.0px;" width="9.0" height="7.0" viewBox="0 0 9.0 7.0"><path d="M1 1.75 L4.5 5.25 L8.0 1.75" fill="none" stroke="#e6e6e6" stroke-width="1.6"/></svg>
<div style="left:779px;top:40px;width:1px;height:23px;background:#474747;"></div>
<svg style="left:789px;top:42px;" width="18" height="18" viewBox="0 0 18 18"><circle cx="9" cy="9" r="8.3" fill="#cdcdcd"/><circle cx="9" cy="9" r="6.1" fill="#8e8e8e"/><path d="M10.85 9.77 L14.91 11.45" stroke="#cdcdcd" stroke-width="1.2"/><path d="M9.77 10.85 L11.45 14.91" stroke="#cdcdcd" stroke-width="1.2"/><path d="M8.23 10.85 L6.55 14.91" stroke="#cdcdcd" stroke-width="1.2"/><path d="M7.15 9.77 L3.09 11.45" stroke="#cdcdcd" stroke-width="1.2"/><path d="M7.15 8.23 L3.09 6.55" stroke="#cdcdcd" stroke-width="1.2"/><path d="M8.23 7.15 L6.55 3.09" stroke="#cdcdcd" stroke-width="1.2"/><path d="M9.77 7.15 L11.45 3.09" stroke="#cdcdcd" stroke-width="1.2"/><path d="M10.85 8.23 L14.91 6.55" stroke="#cdcdcd" stroke-width="1.2"/><circle cx="9" cy="9" r="2.5" fill="#bdbdbd"/><circle cx="9" cy="9" r="1.25" fill="#333"/></svg>
<div style="left:817px;top:40px;width:1px;height:23px;background:#474747;"></div>
<span style="left:825px;top:43.00px;font:12px/16px 'Liberation Sans','Noto Sans CJK SC',sans-serif;color:#e6e6e6;white-space:pre;">对齐</span>
<div style="left:825px;top:59px;width:24px;height:1px;background:repeating-linear-gradient(90deg,#d8d8d8 0 1px,transparent 1px 2px);"></div>
<div style="left:855px;top:40px;width:1px;height:23px;background:#474747;"></div>
<span style="left:863px;top:43.00px;font:12px/16px 'Liberation Sans','Noto Sans CJK SC',sans-serif;color:#e6e6e6;white-space:pre;">形状 :</span>
<div style="left:863px;top:59px;width:33px;height:1px;background:repeating-linear-gradient(90deg,#d8d8d8 0 1px,transparent 1px 2px);"></div>
<svg style="left:907px;top:46px;" width="16" height="10" viewBox="0 0 16 10"><rect x="0.8" y="0.8" width="1.2" height="7.8" fill="#d2d2d2"/><rect x="14" y="0.8" width="1.2" height="7.8" fill="#d2d2d2"/><rect x="3" y="4.1" width="10" height="1.2" fill="#d2d2d2"/><path d="M2.2 4.7 L5.8 2 V7.4 Z M13.8 4.7 L10.2 2 V7.4 Z" fill="#d2d2d2"/></svg>
<div style="left:927px;top:41px;width:65px;height:21px;background:#464646;box-sizing:border-box;border:1px solid #5b5b5b;border-radius:4px;"></div>
<span style="left:931.5px;top:43.30px;font:12px/16px 'Liberation Mono','Noto Sans CJK SC',monospace;color:#f2f2f2;white-space:pre;letter-spacing:-1.2px;">66.529 px</span>
<div style="left:998px;top:39px;width:24px;height:24px;background:#2f2f2f;border-radius:3px;"></div>
<svg style="left:1004px;top:41px;" width="12" height="20" viewBox="0 0 12 20"><path d="M3 8.2 V5.6 a3 3 0 0 1 6 0 V11 a2.2 2.2 0 0 1 -2.6 2.2 M9 11.8 V14.6 a3 3 0 0 1 -6 0 V9 a2.2 2.2 0 0 1 2.6 -2.2" fill="none" stroke="#c4c4c4" stroke-width="1.6"/></svg>
<div style="left:1028px;top:41px;width:65px;height:21px;background:#464646;box-sizing:border-box;border:1px solid #5b5b5b;border-radius:4px;"></div>
<span style="left:1033px;top:43.30px;font:12px/16px 'Liberation Mono','Noto Sans CJK SC',monospace;color:#f2f2f2;white-space:pre;letter-spacing:-1.2px;">1600 px</span>
<svg style="left:1102px;top:43.6px;" width="10" height="15" viewBox="0 0 10 15"><rect x="0.5" y="0" width="8" height="1.2" fill="#d2d2d2"/><rect x="0.5" y="13.3" width="8" height="1.2" fill="#d2d2d2"/><rect x="4" y="2" width="1.2" height="11" fill="#d2d2d2"/><path d="M4.6 1.6 L7.4 5.2 H1.8 Z M4.6 13 L7.4 9.4 H1.8 Z" fill="#d2d2d2"/></svg>
<svg style="left:1126px;top:44px;" width="18" height="15" viewBox="0 0 18 15"><rect x="1" y="0.5" width="2" height="2" fill="#d2d2d2"/><rect x="5" y="0.5" width="2" height="2" fill="#d2d2d2"/><rect x="9" y="0.5" width="4" height="1.6" fill="#d2d2d2"/><rect x="1" y="4.5" width="2" height="2" fill="#d2d2d2"/><rect x="5" y="4.5" width="2" height="1.6" fill="#d2d2d2"/><rect x="1" y="8.5" width="2" height="3.5" fill="#d2d2d2"/><path d="M13.5 12 h3.4 l-1.7 2 z" fill="#d2d2d2"/></svg>
<div style="left:1152px;top:41px;width:70px;height:21px;background:#464646;box-sizing:border-box;border:1px solid #5b5b5b;border-radius:3px;"></div>
<div style="left:1153px;top:42px;width:17px;height:19px;background:#505050;"></div>
<div style="left:1170px;top:42px;width:1px;height:19px;background:#5b5b5b;"></div>
<svg style="left:1156.7px;top:43.0px;" width="9.6" height="7.6" viewBox="0 0 9.6 7.6"><path d="M1 5.70 L4.8 1.90 L8.6 5.70" fill="none" stroke="#e6e6e6" stroke-width="1.4"/></svg>
<svg style="left:1156.7px;top:52.400000000000006px;" width="9.6" height="7.6" viewBox="0 0 9.6 7.6"><path d="M1 1.90 L4.8 5.70 L8.6 1.90" fill="none" stroke="#e6e6e6" stroke-width="1.4"/></svg>
<span style="left:1173px;top:43.30px;font:12px/16px 'Liberation Mono','Noto Sans CJK SC',monospace;color:#f2f2f2;white-space:pre;letter-spacing:-1.2px;">0 px</span>
<div style="left:1228px;top:40px;width:1px;height:23px;background:#474747;"></div>
<span style="left:1236px;top:43.00px;font:12px/16px 'Liberation Sans','Noto Sans CJK SC',sans-serif;color:#ececec;white-space:pre;font-weight:bold;">变换</span>
<div style="left:1236px;top:59px;width:24px;height:1px;background:repeating-linear-gradient(90deg,#d8d8d8 0 1px,transparent 1px 2px);"></div>
<div style="left:1266px;top:40px;width:1px;height:23px;background:#474747;"></div>
<svg style="left:1277px;top:43px;" width="17" height="16" viewBox="0 0 17 16"><rect x="5" y="5.5" width="7" height="5" fill="#8a8a8a" stroke="#d2d2d2" stroke-width="1"/><path d="M0.8 0.8 L4.2 4.2 M16.2 0.8 L12.8 4.2 M0.8 15.2 L4.2 11.8 M16.2 15.2 L12.8 11.8" stroke="#d2d2d2" stroke-width="1.3"/><path d="M4.8 1.8 V4.8 H1.8 M12.2 1.8 V4.8 H15.2 M4.8 14.2 V11.2 H1.8 M12.2 14.2 V11.2 H15.2" stroke="#d2d2d2" stroke-width="1.2" fill="none"/></svg>
<svg style="left:1308px;top:42px;" width="18" height="18" viewBox="0 0 18 18"><rect x="0.6" y="6" width="5.4" height="5" fill="none" stroke="#d2d2d2" stroke-width="1.1"/><rect x="9.5" y="0.8" width="5.6" height="5" fill="none" stroke="#d2d2d2" stroke-width="1.1"/><path d="M7 5.6 V16.6 L10 13.6 L15 13 Z" fill="#d2d2d2"/></svg>
<svg style="left:1330.5px;top:47.5px;" width="9.0" height="7.0" viewBox="0 0 9.0 7.0"><path d="M1 1.75 L4.5 5.25 L8.0 1.75" fill="none" stroke="#e6e6e6" stroke-width="1.6"/></svg>
<svg style="left:1481px;top:43px;" width="15" height="15" viewBox="0 0 15 15"><rect x="2" y="2" width="4.2" height="4.2" fill="#d2d2d2"/><rect x="8.8" y="2" width="4.2" height="4.2" fill="#d2d2d2"/><rect x="2" y="8.8" width="4.2" height="4.2" fill="#d2d2d2"/><rect x="8.8" y="8.8" width="4.2" height="4.2" fill="#d2d2d2"/><path d="M7.5 0 V15 M0 7.5 H15" stroke="#9a9a9a" stroke-width="0.7"/></svg>
<div style="left:1503px;top:39px;width:24px;height:24px;background:#2d2d2d;border-radius:3px;"></div>
<svg style="left:1507px;top:43px;" width="17" height="16" viewBox="0 0 17 16"><rect x="1" y="1" width="3.6" height="3.6" fill="#d2d2d2"/><rect x="1" y="6" width="3.6" height="3.6" fill="#d2d2d2"/><rect x="1" y="11" width="3.6" height="3.6" fill="#d2d2d2"/><path d="M7 5.2 H11.4 a2.7 2.7 0 0 1 0 5.4 H7" fill="none" stroke="#d2d2d2" stroke-width="2"/></svg>
<svg style="left:1529.0px;top:47.0px;" width="9.0" height="7.0" viewBox="0 0 9.0 7.0"><path d="M1 1.75 L4.5 5.25 L8.0 1.75" fill="none" stroke="#e6e6e6" stroke-width="1.6"/></svg>
<svg style="left:1556px;top:46px;" width="13" height="10" viewBox="0 0 13 10"><rect x="0.5" y="0.5" width="2" height="2" fill="#d2d2d2"/><rect x="0.5" y="4" width="2" height="2" fill="#d2d2d2"/><rect x="0.5" y="7.5" width="2" height="2" fill="#d2d2d2"/><rect x="4" y="1" width="8" height="1.1" fill="#d2d2d2"/><rect x="4" y="4.5" width="8" height="1.1" fill="#d2d2d2"/><rect x="4" y="8" width="8" height="1.1" fill="#d2d2d2"/></svg>
<div style="left:5px;top:69px;width:39px;height:874px;background:#535353;"></div>
<div style="left:44px;top:69px;width:2px;height:874px;background:#383838;"></div>
<div style="left:5px;top:69px;width:39px;height:12px;background:#454545;"></div>
<svg style="left:9px;top:72px;" width="8" height="6" viewBox="0 0 8 6"><path d="M0.5 0.3 L3.5 3 L0.5 5.7 Z M4.3 0.3 L7.3 3 L4.3 5.7 Z" fill="#d2d2d2"/></svg>
<svg style="left:13px;top:84px;" width="20" height="4" viewBox="0 0 20 4"><rect x="0" y="0" width="1" height="4" fill="#3a3a3a"/><rect x="2" y="0" width="1" height="4" fill="#3a3a3a"/><rect x="4" y="0" width="1" height="4" fill="#3a3a3a"/><rect x="6" y="0" width="1" height="4" fill="#3a3a3a"/><rect x="8" y="0" width="1" height="4" fill="#3a3a3a"/><rect x="10" y="0" width="1" height="4" fill="#3a3a3a"/><rect x="12" y="0" width="1" height="4" fill="#3a3a3a"/><rect x="14" y="0" width="1" height="4" fill="#3a3a3a"/><rect x="16" y="0" width="1" height="4" fill="#3a3a3a"/><rect x="18" y="0" width="1" height="4" fill="#3a3a3a"/></svg>
<div style="left:9px;top:195.5px;width:31px;height:1px;background:#4d4d4d;"></div>
<div style="left:9px;top:392px;width:31px;height:1px;background:#4d4d4d;"></div>
<div style="left:9px;top:541px;width:31px;height:1px;background:#4d4d4d;"></div>
<div style="left:9px;top:643px;width:31px;height:1px;background:#4d4d4d;"></div>
<div style="left:9px;top:695px;width:31px;height:1px;background:#4d4d4d;"></div>
<div style="left:9px;top:796px;width:31px;height:1px;background:#4d4d4d;"></div>
<div style="left:10px;top:98px;width:28px;height:22px;background:#2f2f2f;border-radius:3px;"></div>
<svg style="left:10px;top:97px" width="30" height="24" viewBox="10 97 30 24"><path d="M19.6 101.8 V117.4 L24.4 112.6 L30.6 112.3 Z" fill="none" stroke="#d2d2d2" stroke-width="1.3" stroke-linejoin="miter"/></svg>
<svg style="left:10px;top:121px" width="30" height="24" viewBox="10 121 30 24"><path d="M19 125.4 V142.2 L24.2 137 L31 136.4 Z" fill="#d2d2d2"/></svg>
<svg style="left:34px;top:139px;" width="4" height="4" viewBox="0 0 4 4"><path d="M3.6 0 V3.6 H0 Z" fill="#d2d2d2"/></svg>
<svg style="left:10px;top:146px" width="30" height="24" viewBox="10 146 30 24"><path d="M16.8 165.2 L26.6 155.2" stroke="#d2d2d2" stroke-width="2.2"/><path d="M21 149.8 l0.8 1.9 1.9 0.8 -1.9 0.8 -0.8 1.9 -0.8 -1.9 -1.9 -0.8 1.9 -0.8z" fill="#d2d2d2"/><path d="M29.3 149 l1 2.4 2.4 1 -2.4 1 -1 2.4 -1 -2.4 -2.4 -1 2.4 -1z" fill="#d2d2d2"/><path d="M30.4 155.4 l0.7 1.6 1.6 0.7 -1.6 0.7 -0.7 1.6 -0.7 -1.6 -1.6 -0.7 1.6 -0.7z" fill="#d2d2d2"/></svg>
<svg style="left:10px;top:169px" width="30" height="24" viewBox="10 169 30 24"><path d="M24 186.6 C19 187 16.4 184 16.6 181.2 C17 177.2 21 174.6 25.4 174.8 C29.6 175 32 177.4 31.6 180.4" fill="none" stroke="#d2d2d2" stroke-width="1.3"/><circle cx="20.4" cy="183.4" r="1.5" fill="none" stroke="#d2d2d2" stroke-width="1.1"/><path d="M21.6 184.6 C22.6 186.4 21.4 188.4 19.2 189" fill="none" stroke="#d2d2d2" stroke-width="1.1"/><path d="M24.6 176.4 V190.4 L28.2 186.6 L33.8 185.8 Z" fill="#d2d2d2"/></svg>
<svg style="left:10px;top:198px" width="30" height="24" viewBox="10 198 30 24"><g transform="translate(0 0)"><path d="M16.2 217.6 L18.8 208.8 L24.6 204.6 L29.8 210 L25.2 215.6 Z" fill="#d2d2d2"/><path d="M25.8 203.6 L27.8 201.8 L32.4 206.8 L30.6 208.8 Z" fill="#d2d2d2"/><path d="M16.6 217.2 L22.6 211.2" stroke="#535353" stroke-width="0.9"/><circle cx="23.2" cy="210.6" r="1.1" fill="#535353"/></g></svg>
<svg style="left:34px;top:216px;" width="4" height="4" viewBox="0 0 4 4"><path d="M3.6 0 V3.6 H0 Z" fill="#d2d2d2"/></svg>
<svg style="left:10px;top:222px" width="30" height="24" viewBox="10 222 30 24"><g transform="translate(2 24)"><path d="M16.2 217.6 L18.8 208.8 L24.6 204.6 L29.8 210 L25.2 215.6 Z" fill="#d2d2d2"/><path d="M25.8 203.6 L27.8 201.8 L32.4 206.8 L30.6 208.8 Z" fill="#d2d2d2"/><path d="M16.6 217.2 L22.6 211.2" stroke="#535353" stroke-width="0.9"/><circle cx="23.2" cy="210.6" r="1.1" fill="#535353"/></g><path d="M15 227 C19.4 229.6 17 234.4 15.4 237.4 C14 240.6 16.6 242.4 18.4 240.6" fill="none" stroke="#d2d2d2" stroke-width="1.2"/></svg>
<svg style="left:10px;top:246px" width="30" height="24" viewBox="10 246 30 24"><text x="24" y="265.6" text-anchor="middle" font-family="Liberation Serif,serif" font-size="22" font-weight="bold" fill="#d2d2d2">T</text></svg>
<svg style="left:34px;top:264px;" width="4" height="4" viewBox="0 0 4 4"><path d="M3.6 0 V3.6 H0 Z" fill="#d2d2d2"/></svg>
<svg style="left:10px;top:270px" width="30" height="24" viewBox="10 270 30 24"><path d="M16.8 289.2 L31 274.8" stroke="#d2d2d2" stroke-width="1.7"/></svg>
<svg style="left:34px;top:288px;" width="4" height="4" viewBox="0 0 4 4"><path d="M3.6 0 V3.6 H0 Z" fill="#d2d2d2"/></svg>
<svg style="left:10px;top:294px" width="30" height="24" viewBox="10 294 30 24"><rect x="16.5" y="299.5" width="15" height="13.5" fill="#6d6d6d" stroke="#d2d2d2" stroke-width="1.1"/></svg>
<svg style="left:34px;top:312px;" width="4" height="4" viewBox="0 0 4 4"><path d="M3.6 0 V3.6 H0 Z" fill="#d2d2d2"/></svg>
<svg style="left:10px;top:318px" width="30" height="24" viewBox="10 318 30 24"><path d="M30.8 322.4 L24.4 330" stroke="#d2d2d2" stroke-width="3" stroke-linecap="round"/><path d="M22 329.2 L25.6 332.6 C25.4 336.6 21.2 338.8 15.8 338 C17.6 336.8 17.4 335 17.8 333.4 C18.4 331 20 329.4 22 329.2 Z" fill="#d2d2d2"/></svg>
<svg style="left:34px;top:336px;" width="4" height="4" viewBox="0 0 4 4"><path d="M3.6 0 V3.6 H0 Z" fill="#d2d2d2"/></svg>
<svg style="left:10px;top:343px" width="30" height="24" viewBox="10 343 30 24"><circle cx="20.2" cy="352.8" r="5.4" fill="#787878" stroke="#d2d2d2" stroke-width="1.2"/><path d="M32.8 348.6 L22.2 360.2" stroke="#535353" stroke-width="5.4"/><path d="M32.8 348.6 L22.2 360.2" stroke="#d2d2d2" stroke-width="3.2" stroke-linecap="round"/><path d="M20.6 359 L23.6 361.6 L20.2 362.8 Z" fill="#d2d2d2"/></svg>
<svg style="left:34px;top:361px;" width="4" height="4" viewBox="0 0 4 4"><path d="M3.6 0 V3.6 H0 Z" fill="#d2d2d2"/></svg>
<svg style="left:10px;top:366px" width="30" height="24" viewBox="10 366 30 24"><path d="M26 369.4 L33 376.6 L25.4 384 L18.4 376.8 Z" fill="#d2d2d2"/><path d="M17.6 377.8 L24.4 384.8 L21.6 386.8 L15.8 380.6 Z" fill="#3d3d3d" stroke="#d2d2d2" stroke-width="1.1"/></svg>
<svg style="left:34px;top:384px;" width="4" height="4" viewBox="0 0 4 4"><path d="M3.6 0 V3.6 H0 Z" fill="#d2d2d2"/></svg>
<svg style="left:10px;top:395px" width="30" height="24" viewBox="10 395 30 24"><path d="M19 402.8 C21.8 399.8 26.8 399.8 29.8 403.2 C31.8 405.6 31.8 408.8 30.6 411" fill="none" stroke="#d2d2d2" stroke-width="1.9"/><path d="M15.8 399.2 L22.6 400 L16.6 406.6 Z" fill="#d2d2d2"/><path d="M29.8 412.2 C26.8 415.8 21 415.8 18 412.2 C17.2 411.2 16.8 410.2 16.6 409.2" fill="none" stroke="#d2d2d2" stroke-width="1.6" stroke-dasharray="1.2 1.5"/></svg>
<svg style="left:34px;top:413px;" width="4" height="4" viewBox="0 0 4 4"><path d="M3.6 0 V3.6 H0 Z" fill="#d2d2d2"/></svg>
<svg style="left:10px;top:419px" width="30" height="24" viewBox="10 419 30 24"><rect x="19.8" y="423.6" width="12.6" height="10.6" fill="none" stroke="#d2d2d2" stroke-width="1.1"/><rect x="15.6" y="430.4" width="8.6" height="8" fill="none" stroke="#d2d2d2" stroke-width="1.1"/><path d="M26 430.6 L30 426.4" stroke="#d2d2d2" stroke-width="1.1"/><path d="M27.4 425.6 H31 V429.2 Z" fill="#d2d2d2"/></svg>
<svg style="left:34px;top:437px;" width="4" height="4" viewBox="0 0 4 4"><path d="M3.6 0 V3.6 H0 Z" fill="#d2d2d2"/></svg>
<svg style="left:10px;top:443px" width="30" height="24" viewBox="10 443 30 24"><path d="M17.2 450.6 C18 448.4 21.2 447.8 22.4 450.4 C23 451.8 22.6 453 22 454.2 C23.6 452.8 25 452.2 26.2 452.4 C27.6 450.6 30.6 450.8 32.2 452.8 C33.8 454.8 34 457.6 33 459.8 C32.4 457.6 31 456.6 29.4 456.8 C29.6 460 26.4 462.4 22.8 462 C19.6 461.6 17.8 459.4 18.8 456.8 C19.6 454.8 20.6 453.4 20 452 C19.6 451 18.4 450.6 17.2 450.6 Z" fill="#d2d2d2"/><path d="M17 460.4 L26 451.2" stroke="#535353" stroke-width="1"/><path d="M15.4 462 L17.6 459.8" stroke="#d2d2d2" stroke-width="1"/><circle cx="21.2" cy="456.2" r="1.5" fill="#535353" stroke="#d2d2d2" stroke-width="0.8"/><circle cx="15.8" cy="461.4" r="1.3" fill="#535353" stroke="#d2d2d2" stroke-width="0.9"/><circle cx="26.6" cy="450.6" r="1.2" fill="#535353" stroke="#d2d2d2" stroke-width="0.8"/></svg>
<svg style="left:34px;top:461px;" width="4" height="4" viewBox="0 0 4 4"><path d="M3.6 0 V3.6 H0 Z" fill="#d2d2d2"/></svg>
<svg style="left:10px;top:467px" width="30" height="24" viewBox="10 467 30 24"><g transform="translate(22.2 478.4) scale(0.9) translate(-23.4 -479.4)"><path d="M23.4 471.6 L31 479.2 L29.6 480.4 L28.4 479.8 L25.8 482.4 L26 485.4 L24.8 486.4 L16.6 478.2 L17.8 477 L20.8 477.2 L23.4 474.6 L22.4 472.8 Z" fill="#d2d2d2"/><path d="M20.6 482.4 L15.4 487.6" stroke="#d2d2d2" stroke-width="1.8"/></g></svg>
<svg style="left:34px;top:485px;" width="4" height="4" viewBox="0 0 4 4"><path d="M3.6 0 V3.6 H0 Z" fill="#d2d2d2"/></svg>
<svg style="left:10px;top:491px" width="30" height="24" viewBox="10 491 30 24"><circle cx="19.8" cy="502.2" r="4.6" fill="none" stroke="#d2d2d2" stroke-width="1.1"/><circle cx="24.6" cy="500.2" r="5.2" fill="none" stroke="#d2d2d2" stroke-width="1.1"/><circle cx="19.8" cy="502.2" r="4.05" fill="#535353"/><circle cx="24.6" cy="500.2" r="4.65" fill="#535353"/><path d="M17 502 H24.4" stroke="#d2d2d2" stroke-width="1.1" stroke-dasharray="1 1"/><path d="M26.6 499.8 V511.4 L29.8 508.6 L34.4 508 Z" fill="#d2d2d2" stroke="#535353" stroke-width="0.7"/></svg>
<svg style="left:34px;top:509px;" width="4" height="4" viewBox="0 0 4 4"><path d="M3.6 0 V3.6 H0 Z" fill="#d2d2d2"/></svg>
<svg style="left:10px;top:515px" width="30" height="24" viewBox="10 515 30 24"><path d="M15.6 519.6 L24.6 522.4 L25 527.6 L15.6 534.8 Z" fill="none" stroke="#d2d2d2" stroke-width="1.1"/><path d="M18.8 520.6 L18.6 532.4 M21.8 521.6 L21.8 530 M15.6 524.6 L24.8 525 M15.6 529.8 L24.6 527.8" stroke="#d2d2d2" stroke-width="0.9"/><path d="M25 526.4 L31.8 533.6 H17 Z" fill="#8c8c8c"/><path d="M15.6 535 H32 M21 531.4 H29.8 M23.4 529 H27.4" stroke="#d2d2d2" stroke-width="1"/></svg>
<svg style="left:34px;top:533px;" width="4" height="4" viewBox="0 0 4 4"><path d="M3.6 0 V3.6 H0 Z" fill="#d2d2d2"/></svg>
<svg style="left:10px;top:544px" width="30" height="24" viewBox="10 544 30 24"><rect x="16.5" y="549.5" width="15" height="13.5" fill="none" stroke="#d2d2d2" stroke-width="1.2"/><path d="M16.5 558.4 C20 556 21.8 553 21.6 549.5 M18.4 563 C23 559.4 26.4 554.6 26.6 549.5 M24.6 563 C27 559.6 29.6 557.6 31.5 557 M16.5 553.4 C19.6 554.6 23 554.4 25.6 553 M21.8 557.6 C25 557.6 28.6 555 31.5 552.6 M21.4 560.6 L22.4 563" fill="none" stroke="#d2d2d2" stroke-width="0.9"/></svg>
<svg style="left:10px;top:568px" width="30" height="24" viewBox="10 568 30 24"><defs><linearGradient id="gt" x1="0" x2="1"><stop offset="0" stop-color="#cfcfcf"/><stop offset="1" stop-color="#565656"/></linearGradient></defs><rect x="16.5" y="573.5" width="15" height="13.5" fill="url(#gt)" stroke="#d2d2d2" stroke-width="1.1"/></svg>
<svg style="left:10px;top:592px" width="30" height="24" viewBox="10 592 30 24"><g transform="rotate(45 22 606)"><rect x="20.1" y="603" width="3.8" height="11.6" rx="1.9" fill="none" stroke="#d2d2d2" stroke-width="1.1"/><rect x="18.4" y="600.8" width="7.2" height="2.2" rx="0.6" fill="#d2d2d2"/><rect x="19.9" y="593.8" width="4.2" height="7.4" rx="2" fill="#d2d2d2"/></g></svg>
<svg style="left:34px;top:610px;" width="4" height="4" viewBox="0 0 4 4"><path d="M3.6 0 V3.6 H0 Z" fill="#d2d2d2"/></svg>
<svg style="left:10px;top:616px" width="30" height="24" viewBox="10 616 30 24"><rect x="15" y="620.6" width="7.4" height="7.4" fill="#d2d2d2"/><circle cx="24" cy="628" r="3.7" fill="#8a8a8a" stroke="#b4b4b4" stroke-width="1"/><circle cx="28.6" cy="631.6" r="3.7" fill="#535353" stroke="#d2d2d2" stroke-width="1.2"/></svg>
<svg style="left:10px;top:645px" width="30" height="24" viewBox="10 645 30 24"><rect x="23.6" y="653.6" width="8.6" height="11" fill="none" stroke="#d2d2d2" stroke-width="1.2"/><rect x="25.4" y="649.6" width="5" height="3.2" fill="#d2d2d2"/><circle cx="27.9" cy="659.2" r="2.3" fill="none" stroke="#d2d2d2" stroke-width="1.4"/><rect x="15" y="650" width="1.6" height="1.6" fill="#d2d2d2"/><rect x="18" y="650" width="1.6" height="1.6" fill="#d2d2d2"/><rect x="21" y="650" width="1.6" height="1.6" fill="#d2d2d2"/><rect x="15" y="653" width="1.6" height="1.6" fill="#d2d2d2"/><rect x="18" y="653" width="1.6" height="1.6" fill="#d2d2d2"/><rect x="15" y="656" width="1.6" height="1.6" fill="#d2d2d2"/></svg>
<svg style="left:34px;top:663px;" width="4" height="4" viewBox="0 0 4 4"><path d="M3.6 0 V3.6 H0 Z" fill="#d2d2d2"/></svg>
<svg style="left:10px;top:669px" width="30" height="24" viewBox="10 669 30 24"><path d="M15.6 673 V688.4 H32.4" fill="none" stroke="#d2d2d2" stroke-width="1.1"/><rect x="18.6" y="680.4" width="3" height="7.4" fill="#d2d2d2"/><rect x="23.8" y="674.4" width="3" height="13.4" fill="#d2d2d2"/><rect x="29" y="676.6" width="3" height="11.2" fill="#d2d2d2"/></svg>
<svg style="left:34px;top:687px;" width="4" height="4" viewBox="0 0 4 4"><path d="M3.6 0 V3.6 H0 Z" fill="#d2d2d2"/></svg>
<svg style="left:10px;top:697px" width="30" height="24" viewBox="10 697 30 24"><path d="M19.6 700.8 V708 M14.6 706.4 H19.6" stroke="#d2d2d2" stroke-width="1.1"/><path d="M19.6 707 H27.4 L30.6 710.2 V716.6 H19.6 Z" fill="#6d6d6d" stroke="#d2d2d2" stroke-width="1.1"/><path d="M27 706.8 V710.6 H30.8" fill="#535353" stroke="#d2d2d2" stroke-width="0.9"/></svg>
<svg style="left:10px;top:722px" width="30" height="24" viewBox="10 722 30 24"><path d="M15.8 741.4 L26.6 729.4 L30.4 732.2 L27.4 737.4 Z" fill="none" stroke="#d2d2d2" stroke-width="1.2" stroke-linejoin="round"/><path d="M26.2 729 L29.4 725.6 L32.8 728.6 L30.8 732.6 Z" fill="#d2d2d2"/></svg>
<svg style="left:34px;top:740px;" width="4" height="4" viewBox="0 0 4 4"><path d="M3.6 0 V3.6 H0 Z" fill="#d2d2d2"/></svg>
<svg style="left:10px;top:746px" width="30" height="24" viewBox="10 746 30 24"><path d="M20.4 765.4 L16 758.8 C15.6 757.8 17 757 17.8 757.8 L20 760 L19.4 752.8 C19.4 751.6 21 751.6 21.2 752.6 L22.2 757.6 L22.6 750.8 C22.8 749.6 24.4 749.6 24.4 750.8 L24.6 757.4 L26 751.6 C26.4 750.6 27.8 751 27.8 752 L27.2 758.2 L29.4 754.6 C30 753.8 31.4 754.4 31 755.4 L28.4 762.4 C27.6 764.4 26.6 765.6 25.4 766 H22 Z" fill="#d2d2d2"/></svg>
<svg style="left:34px;top:764px;" width="4" height="4" viewBox="0 0 4 4"><path d="M3.6 0 V3.6 H0 Z" fill="#d2d2d2"/></svg>
<svg style="left:10px;top:770px" width="30" height="24" viewBox="10 770 30 24"><circle cx="22" cy="780.4" r="5.4" fill="none" stroke="#d2d2d2" stroke-width="1.4"/><path d="M26 784.6 L31.2 789.8" stroke="#d2d2d2" stroke-width="2.2" stroke-linecap="round"/></svg>
<svg style="left:9px;top:800px;" width="13" height="14" viewBox="0 0 13 14"><rect x="4.5" y="5" width="7.6" height="7.6" fill="#000" stroke="#fff" stroke-width="0"/><rect x="6.8" y="7.2" width="3.2" height="3.2" fill="#535353" stroke="#fff" stroke-width="0.9"/><rect x="0.8" y="1.2" width="7.4" height="7.4" fill="#fff" stroke="#1e1e1e" stroke-width="1.1"/></svg>
<svg style="left:29px;top:802px;" width="12" height="12" viewBox="0 0 12 12"><path d="M3.4 2.6 H6.6 C8 2.6 8.6 3.4 8.6 4.6 V8" fill="none" stroke="#d2d2d2" stroke-width="1.3"/><path d="M0.6 2.6 L4 0 V5.2 Z M8.6 11.4 L6 7.6 H11.2 Z" fill="#d2d2d2"/></svg>
<div style="left:19.5px;top:829.5px;width:19px;height:18.5px;background:#000;box-sizing:border-box;border:1px solid #ededed;"></div>
<div style="left:24px;top:834px;width:10px;height:9.5px;background:#555;box-sizing:border-box;border:1.5px solid #fff;"></div>
<div style="left:9.5px;top:819.5px;width:19px;height:19px;background:#d9cbc1;box-sizing:border-box;border:1px solid #f7f3f0;box-shadow:0 0 0 0.5px #333;"></div>
<div style="left:10px;top:855.5px;width:27.5px;height:9px;background:#2a2a2a;"></div>
<div style="left:11px;top:856.5px;width:8px;height:7px;background:#d9cbc1;"></div>
<div style="left:19.8px;top:856.5px;width:8px;height:7px;background:linear-gradient(90deg,#f4f4f4,#1a1a1a);"></div>
<svg style="left:28.6px;top:856.5px;" width="8" height="7" viewBox="0 0 8 7"><rect width="8" height="7" fill="#fff"/><path d="M0 7 L8 0" stroke="#f00" stroke-width="1.8"/></svg>
<svg style="left:18px;top:873px;" width="12" height="12" viewBox="0 0 12 12"><circle cx="5" cy="5" r="3.8" fill="#666" stroke="#d2d2d2" stroke-width="1.2"/><rect x="5.2" y="5.4" width="5.8" height="5.4" fill="#d2d2d2"/></svg>
<svg style="left:14px;top:896px;" width="20" height="15" viewBox="0 0 20 15"><rect x="0.8" y="4.6" width="11" height="9" fill="#6a6a6a" stroke="#d2d2d2" stroke-width="1.1"/><rect x="7" y="0.8" width="11.6" height="8.6" fill="#7a7a7a" stroke="#d2d2d2" stroke-width="1.1"/><rect x="7" y="0.8" width="11.6" height="1.6" fill="#d2d2d2"/></svg>
<div style="left:1295px;top:69px;width:290px;height:12px;background:#454545;"></div>
<div style="left:1295px;top:81px;width:37px;height:862px;background:#535353;"></div>
<div style="left:1332px;top:81px;width:1px;height:862px;background:#383838;"></div>
<div style="left:1333px;top:81px;width:1px;height:862px;background:#4a4a4a;"></div>
<div style="left:1334px;top:81px;width:1px;height:862px;background:#383838;"></div>
<div style="left:1295px;top:80.5px;width:290px;height:1px;background:#3c3c3c;"></div>
<svg style="left:1318.5px;top:72px;" width="8" height="6" viewBox="0 0 8 6"><path d="M3.4 0.3 L0.4 3 L3.4 5.7 Z M7.4 0.3 L4.4 3 L7.4 5.7 Z" fill="#d2d2d2"/></svg>
<svg style="left:1572px;top:72px;" width="8" height="6" viewBox="0 0 8 6"><path d="M0.5 0.3 L3.5 3 L0.5 5.7 Z M4.3 0.3 L7.3 3 L4.3 5.7 Z" fill="#d2d2d2"/></svg>
<svg style="left:1304px;top:84px;" width="20" height="4" viewBox="0 0 20 4"><rect x="0" y="0" width="1" height="4" fill="#3a3a3a"/><rect x="2" y="0" width="1" height="4" fill="#3a3a3a"/><rect x="4" y="0" width="1" height="4" fill="#3a3a3a"/><rect x="6" y="0" width="1" height="4" fill="#3a3a3a"/><rect x="8" y="0" width="1" height="4" fill="#3a3a3a"/><rect x="10" y="0" width="1" height="4" fill="#3a3a3a"/><rect x="12" y="0" width="1" height="4" fill="#3a3a3a"/><rect x="14" y="0" width="1" height="4" fill="#3a3a3a"/><rect x="16" y="0" width="1" height="4" fill="#3a3a3a"/><rect x="18" y="0" width="1" height="4" fill="#3a3a3a"/></svg>
<svg style="left:1304px;top:153px;" width="20" height="4" viewBox="0 0 20 4"><rect x="0" y="0" width="1" height="4" fill="#3a3a3a"/><rect x="2" y="0" width="1" height="4" fill="#3a3a3a"/><rect x="4" y="0" width="1" height="4" fill="#3a3a3a"/><rect x="6" y="0" width="1" height="4" fill="#3a3a3a"/><rect x="8" y="0" width="1" height="4" fill="#3a3a3a"/><rect x="10" y="0" width="1" height="4" fill="#3a3a3a"/><rect x="12" y="0" width="1" height="4" fill="#3a3a3a"/><rect x="14" y="0" width="1" height="4" fill="#3a3a3a"/><rect x="16" y="0" width="1" height="4" fill="#3a3a3a"/><rect x="18" y="0" width="1" height="4" fill="#3a3a3a"/></svg>
<svg style="left:1304px;top:250px;" width="20" height="4" viewBox="0 0 20 4"><rect x="0" y="0" width="1" height="4" fill="#3a3a3a"/><rect x="2" y="0" width="1" height="4" fill="#3a3a3a"/><rect x="4" y="0" width="1" height="4" fill="#3a3a3a"/><rect x="6" y="0" width="1" height="4" fill="#3a3a3a"/><rect x="8" y="0" width="1" height="4" fill="#3a3a3a"/><rect x="10" y="0" width="1" height="4" fill="#3a3a3a"/><rect x="12" y="0" width="1" height="4" fill="#3a3a3a"/><rect x="14" y="0" width="1" height="4" fill="#3a3a3a"/><rect x="16" y="0" width="1" height="4" fill="#3a3a3a"/><rect x="18" y="0" width="1" height="4" fill="#3a3a3a"/></svg>
<svg style="left:1304px;top:347px;" width="20" height="4" viewBox="0 0 20 4"><rect x="0" y="0" width="1" height="4" fill="#3a3a3a"/><rect x="2" y="0" width="1" height="4" fill="#3a3a3a"/><rect x="4" y="0" width="1" height="4" fill="#3a3a3a"/><rect x="6" y="0" width="1" height="4" fill="#3a3a3a"/><rect x="8" y="0" width="1" height="4" fill="#3a3a3a"/><rect x="10" y="0" width="1" height="4" fill="#3a3a3a"/><rect x="12" y="0" width="1" height="4" fill="#3a3a3a"/><rect x="14" y="0" width="1" height="4" fill="#3a3a3a"/><rect x="16" y="0" width="1" height="4" fill="#3a3a3a"/><rect x="18" y="0" width="1" height="4" fill="#3a3a3a"/></svg>
<svg style="left:1304px;top:416px;" width="20" height="4" viewBox="0 0 20 4"><rect x="0" y="0" width="1" height="4" fill="#3a3a3a"/><rect x="2" y="0" width="1" height="4" fill="#3a3a3a"/><rect x="4" y="0" width="1" height="4" fill="#3a3a3a"/><rect x="6" y="0" width="1" height="4" fill="#3a3a3a"/><rect x="8" y="0" width="1" height="4" fill="#3a3a3a"/><rect x="10" y="0" width="1" height="4" fill="#3a3a3a"/><rect x="12" y="0" width="1" height="4" fill="#3a3a3a"/><rect x="14" y="0" width="1" height="4" fill="#3a3a3a"/><rect x="16" y="0" width="1" height="4" fill="#3a3a3a"/><rect x="18" y="0" width="1" height="4" fill="#3a3a3a"/></svg>
<svg style="left:1304px;top:513px;" width="20" height="4" viewBox="0 0 20 4"><rect x="0" y="0" width="1" height="4" fill="#3a3a3a"/><rect x="2" y="0" width="1" height="4" fill="#3a3a3a"/><rect x="4" y="0" width="1" height="4" fill="#3a3a3a"/><rect x="6" y="0" width="1" height="4" fill="#3a3a3a"/><rect x="8" y="0" width="1" height="4" fill="#3a3a3a"/><rect x="10" y="0" width="1" height="4" fill="#3a3a3a"/><rect x="12" y="0" width="1" height="4" fill="#3a3a3a"/><rect x="14" y="0" width="1" height="4" fill="#3a3a3a"/><rect x="16" y="0" width="1" height="4" fill="#3a3a3a"/><rect x="18" y="0" width="1" height="4" fill="#3a3a3a"/></svg>
<div style="left:1295px;top:149px;width:37px;height:1px;background:#3e3e3e;"></div>
<div style="left:1295px;top:246px;width:37px;height:1px;background:#3e3e3e;"></div>
<div style="left:1295px;top:343px;width:37px;height:1px;background:#3e3e3e;"></div>
<div style="left:1295px;top:412px;width:37px;height:1px;background:#3e3e3e;"></div>
<div style="left:1295px;top:509px;width:37px;height:1px;background:#3e3e3e;"></div>
<div style="left:1295px;top:606px;width:37px;height:1px;background:#3e3e3e;"></div>
<svg style="left:1300px;top:91px" width="28" height="26" viewBox="1300 91 28 26"><path d="M1314.2 97.4 C1319.8 97.4 1323.6 100.2 1323.4 103.6 C1323.2 106.2 1320.4 106.6 1319 106.8 C1317.4 107.2 1317.6 108.4 1318.2 109.2 C1318.8 110.4 1317.8 111.8 1315 111.8 C1309.2 111.8 1304.8 109.2 1304.8 104.8 C1304.8 100.4 1309 97.4 1314.2 97.4 Z" fill="#d2d2d2"/><circle cx="1308.4" cy="106.4" r="1.4" fill="#535353"/><circle cx="1311.8" cy="108.6" r="1.4" fill="#535353"/><circle cx="1315.6" cy="107.2" r="1.4" fill="#535353"/><circle cx="1319.6" cy="103.6" r="1.4" fill="#535353"/><circle cx="1318" cy="100.4" r="1.4" fill="#535353"/></svg>
<svg style="left:1300px;top:119px" width="28" height="26" viewBox="1300 119 28 26"><defs><linearGradient id="gq" x1="0" y1="1" x2="1" y2="0"><stop offset="0" stop-color="#6a6a6a"/><stop offset="1" stop-color="#d8d8d8"/></linearGradient></defs><path d="M1307 139.6 V124.6 C1315.4 124.6 1322 131 1322.4 139.6 Z" fill="url(#gq)" stroke="#d2d2d2" stroke-width="1.2"/></svg>
<svg style="left:1300px;top:160px" width="28" height="26" viewBox="1300 160 28 26"><rect x="1306.5" y="168.5" width="15.6" height="10" fill="#6a6a6a" stroke="#d2d2d2" stroke-width="1.1"/><rect x="1307" y="169" width="4.6" height="4.4" fill="#b4b4b4"/><rect x="1317.2" y="169" width="4.6" height="4.4" fill="#a4a4a4"/><rect x="1312" y="174" width="4.8" height="4.2" fill="#9a9a9a"/><path d="M1306.5 173.5 H1322 M1311.7 168.5 V178.5 M1316.9 168.5 V178.5" stroke="#d2d2d2" stroke-width="1"/></svg>
<svg style="left:1300px;top:188px" width="28" height="26" viewBox="1300 188 28 26"><path d="M1309 203.6 H1319.4 L1318.4 211 H1310 Z" fill="#d2d2d2"/><path d="M1312.2 203 L1311.4 196.4 C1310 195 1311 191.6 1312.6 190.6 C1314.2 192 1314.6 195.4 1313.4 196.6 L1313.6 203 Z" fill="#d2d2d2"/><path d="M1315.2 203 L1316.4 198.2 C1315.4 196 1317.6 193.8 1320 194.2 C1322.2 194.8 1322.6 197 1321.6 198.4 C1320.4 197.6 1318.6 197.8 1317.6 198.8 L1316.8 203 Z" fill="#d2d2d2"/><path d="M1310.6 203 L1309.4 199.8 C1307.6 199.8 1306.4 198 1306.8 196 C1308.6 196.4 1310.2 197.8 1310.4 199.4 L1311.6 203 Z" fill="#d2d2d2"/></svg>
<svg style="left:1300px;top:216px" width="28" height="26" viewBox="1300 216 28 26"><circle cx="1314.4" cy="224.4" r="4.2" fill="#d2d2d2"/><circle cx="1310.2" cy="230" r="4.2" fill="#d2d2d2"/><circle cx="1318.6" cy="230" r="4.2" fill="#d2d2d2"/><path d="M1313.4 229 H1315.4 L1315.8 235 L1318.4 237.6 H1310.4 L1313 235 Z" fill="#d2d2d2"/></svg>
<svg style="left:1300px;top:257px" width="28" height="26" viewBox="1300 257 28 26"><rect x="1306" y="263.4" width="17" height="1.4" fill="#d2d2d2"/><rect x="1306" y="268" width="17" height="2.4" fill="#d2d2d2"/><rect x="1306" y="273.6" width="17" height="3.6" fill="#d2d2d2"/></svg>
<svg style="left:1300px;top:285px" width="28" height="26" viewBox="1300 285 28 26"><defs><linearGradient id="gd" x1="0" x2="1" y1="0" y2="0.6"><stop offset="0" stop-color="#d6d6d6"/><stop offset="1" stop-color="#4a4a4a"/></linearGradient></defs><rect x="1306.5" y="292.5" width="16.4" height="11" fill="url(#gd)" stroke="#d2d2d2" stroke-width="1.1"/></svg>
<svg style="left:1300px;top:314px" width="28" height="26" viewBox="1300 314 28 26"><circle cx="1312" cy="324" r="6" fill="#d2d2d2"/><circle cx="1316.8" cy="329.4" r="5.6" fill="#8c8c8c" stroke="#d2d2d2" stroke-width="1.3"/></svg>
<svg style="left:1300px;top:355px" width="28" height="26" viewBox="1300 355 28 26"><circle cx="1314.6" cy="367.6" r="7.8" fill="none" stroke="#d2d2d2" stroke-width="1.1" stroke-dasharray="2 1.5"/><circle cx="1314.6" cy="367.6" r="5.6" fill="#d2d2d2"/></svg>
<svg style="left:1300px;top:383px" width="28" height="26" viewBox="1300 383 28 26"><rect x="1309.6" y="388.6" width="12.8" height="11.8" fill="none" stroke="#d2d2d2" stroke-width="1.2"/><rect x="1306.2" y="397" width="5.4" height="5.4" fill="#535353" stroke="#d2d2d2" stroke-width="1.1"/><rect x="1308.6" y="399.4" width="5.4" height="5.4" fill="#535353" stroke="#d2d2d2" stroke-width="1.1"/></svg>
<div style="left:1300px;top:425px;width:27px;height:22.5px;background:#373737;border-radius:1px;"></div>
<svg style="left:1300px;top:423.5px" width="28" height="26" viewBox="1300 423.5 28 26"><path d="M1314.6 427.6 L1322.8 432.4 L1314.6 437.2 L1306.4 432.4 Z" fill="#d2d2d2"/><path d="M1308.6 437 L1306.4 438.4 L1314.6 443.2 L1322.8 438.4 L1320.6 437 L1314.6 440.6 Z" fill="#d2d2d2"/></svg>
<svg style="left:1300px;top:451px" width="28" height="26" viewBox="1300 451 28 26"><path d="M1312.6 457.8 H1307.2 V472.4 H1321.6 V467" fill="none" stroke="#d2d2d2" stroke-width="1.6"/><path d="M1314.4 465.4 L1322.4 457.2" stroke="#d2d2d2" stroke-width="1.6"/><path d="M1316.4 456 H1323.6 V463.2" fill="none" stroke="#d2d2d2" stroke-width="1.6"/></svg>
<svg style="left:1300px;top:479px" width="28" height="26" viewBox="1300 479 28 26"><rect x="1306.6" y="483.6" width="9.4" height="11" fill="none" stroke="#d2d2d2" stroke-width="1.2"/><rect x="1311" y="490.2" width="12" height="10.2" fill="#535353" stroke="#d2d2d2" stroke-width="1.2"/></svg>
<svg style="left:1300px;top:521px" width="28" height="26" viewBox="1300 521 28 26"><rect x="1309.2" y="528.4" width="11" height="10.6" fill="none" stroke="#d2d2d2" stroke-width="1"/><rect x="1307.4" y="526.6" width="3" height="3" fill="#d2d2d2"/><rect x="1307.4" y="532.2" width="3" height="3" fill="#d2d2d2"/><rect x="1307.4" y="537.8" width="3" height="3" fill="#d2d2d2"/><rect x="1313.2" y="526.6" width="3" height="3" fill="#d2d2d2"/><rect x="1313.2" y="537.8" width="3" height="3" fill="#d2d2d2"/><rect x="1319" y="526.6" width="3" height="3" fill="#d2d2d2"/><rect x="1319" y="532.2" width="3" height="3" fill="#d2d2d2"/><rect x="1319" y="537.8" width="3" height="3" fill="#d2d2d2"/><circle cx="1314.7" cy="533.7" r="0.9" fill="#d2d2d2"/></svg>
<svg style="left:1300px;top:548px" width="28" height="26" viewBox="1300 548 28 26"><rect x="1307" y="552.6" width="1.2" height="17.6" fill="#d2d2d2"/><rect x="1309.6" y="555" width="6" height="4.6" fill="#d2d2d2"/><rect x="1309.6" y="562.4" width="11.6" height="4.6" fill="#d2d2d2"/></svg>
<svg style="left:1300px;top:575px" width="28" height="26" viewBox="1300 575 28 26"><rect x="1307.2" y="581" width="9" height="9" fill="#d2d2d2"/><rect x="1311.4" y="585.2" width="10.4" height="10.4" fill="#535353"/><rect x="1312.6" y="586.4" width="9" height="9" fill="#d2d2d2"/><rect x="1312.6" y="586.4" width="3.6" height="3.6" fill="#9a9a9a"/></svg>
<div style="left:1335px;top:81px;width:250px;height:862px;background:#535353;"></div>
<div style="left:1335px;top:81px;width:250px;height:26px;background:#424242;"></div>
<div style="left:1335px;top:81px;width:42px;height:27px;background:#535353;"></div>
<div style="left:1377px;top:81px;width:1px;height:26px;background:#3a3a3a;"></div>
<div style="left:1378px;top:81px;width:38px;height:26px;background:#474747;"></div>
<div style="left:1416px;top:81px;width:1px;height:26px;background:#3a3a3a;"></div>
<div style="left:1377px;top:107px;width:208px;height:1px;background:#3c3c3c;"></div>
<span style="left:1345px;top:86.50px;font:12px/16px 'Liberation Sans','Noto Sans CJK SC',sans-serif;color:#f4f4f4;white-space:pre;">属性</span>
<span style="left:1386px;top:86.50px;font:12px/16px 'Liberation Sans','Noto Sans CJK SC',sans-serif;color:#a8a8a8;white-space:pre;">库</span>
<span style="left:1345px;top:118.50px;font:10px/14px 'Liberation Sans','Noto Sans CJK SC',sans-serif;color:#c4c4c4;white-space:pre;">矩形</span>
<div style="left:1336px;top:140px;width:248px;height:2px;background:#4c4c4c;"></div>
<span style="left:1345px;top:149.50px;font:10px/14px 'Liberation Sans','Noto Sans CJK SC',sans-serif;color:#c4c4c4;white-space:pre;">变换</span>
<svg style="left:1345px;top:186px;" width="20" height="20" viewBox="0 0 20 20"><path d="M2.5 2.5 H17.5 V17.5 H2.5 Z M2.5 10 H17.5 M10 2.5 V17.5" fill="none" stroke="#d2d2d2" stroke-width="1"/><rect x="0.5" y="0.5" width="4" height="4" fill="#535353" stroke="#d2d2d2" stroke-width="1"/><rect x="0.5" y="8.0" width="4" height="4" fill="#535353" stroke="#d2d2d2" stroke-width="1"/><rect x="0.5" y="15.5" width="4" height="4" fill="#535353" stroke="#d2d2d2" stroke-width="1"/><rect x="8.0" y="0.5" width="4" height="4" fill="#535353" stroke="#d2d2d2" stroke-width="1"/><rect x="7.5" y="7.5" width="5" height="5" fill="#535353"/><rect x="8" y="8" width="4" height="4" fill="#fff"/><rect x="8.0" y="15.5" width="4" height="4" fill="#535353" stroke="#d2d2d2" stroke-width="1"/><rect x="15.5" y="0.5" width="4" height="4" fill="#535353" stroke="#d2d2d2" stroke-width="1"/><rect x="15.5" y="8.0" width="4" height="4" fill="#535353" stroke="#d2d2d2" stroke-width="1"/><rect x="15.5" y="15.5" width="4" height="4" fill="#535353" stroke="#d2d2d2" stroke-width="1"/></svg>
<span style="left:1378px;top:175.70px;font:11px/15px 'Liberation Mono','Noto Sans CJK SC',monospace;color:#b4b4b4;white-space:pre;letter-spacing:-0.8px;">X:</span>
<div style="left:1391.5px;top:172.7px;width:55.5px;height:19.8px;background:#444444;box-sizing:border-box;border:1px solid #626262;border-radius:3px;"></div>
<span style="left:1395.5px;top:174.60px;font:12px/16px 'Liberation Mono','Noto Sans CJK SC',monospace;color:#f2f2f2;white-space:pre;letter-spacing:-1.2px;">33.265 p</span>
<span style="left:1378px;top:201.70px;font:11px/15px 'Liberation Mono','Noto Sans CJK SC',monospace;color:#b4b4b4;white-space:pre;letter-spacing:-0.8px;">Y:</span>
<div style="left:1391.5px;top:198.5px;width:55.5px;height:19.6px;background:#444444;box-sizing:border-box;border:1px solid #626262;border-radius:3px;"></div>
<span style="left:1395.5px;top:200.60px;font:12px/16px 'Liberation Mono','Noto Sans CJK SC',monospace;color:#f2f2f2;white-space:pre;letter-spacing:-1.2px;">800 px</span>
<span style="left:1463.5px;top:176.50px;font:10px/14px 'Liberation Sans','Noto Sans CJK SC',sans-serif;color:#c4c4c4;white-space:pre;">宽</span>
<span style="left:1475px;top:175.70px;font:11px/15px 'Liberation Mono','Noto Sans CJK SC',monospace;color:#b4b4b4;white-space:pre;letter-spacing:-0.8px;">:</span>
<div style="left:1483.5px;top:172.7px;width:55.5px;height:19.8px;background:#444444;box-sizing:border-box;border:1px solid #626262;border-radius:3px;"></div>
<span style="left:1487.5px;top:174.60px;font:12px/16px 'Liberation Mono','Noto Sans CJK SC',monospace;color:#f2f2f2;white-space:pre;letter-spacing:-1.2px;">66.529 p</span>
<span style="left:1463.5px;top:202.50px;font:10px/14px 'Liberation Sans','Noto Sans CJK SC',sans-serif;color:#c4c4c4;white-space:pre;">高</span>
<span style="left:1475px;top:201.70px;font:11px/15px 'Liberation Mono','Noto Sans CJK SC',monospace;color:#b4b4b4;white-space:pre;letter-spacing:-0.8px;">:</span>
<div style="left:1483.5px;top:198.5px;width:55.5px;height:19.6px;background:#444444;box-sizing:border-box;border:1px solid #626262;border-radius:3px;"></div>
<span style="left:1487.5px;top:200.60px;font:12px/16px 'Liberation Mono','Noto Sans CJK SC',monospace;color:#f2f2f2;white-space:pre;letter-spacing:-1.2px;">1600 px</span>
<svg style="left:1550px;top:185px;" width="18" height="22" viewBox="0 0 18 22"><path d="M6 9.4 V7 a3 3 0 0 1 6 0 V12 a2.2 2.2 0 0 1 -2.6 2.2 M12 12.8 V15.2 a3 3 0 0 1 -6 0 V10.2 a2.2 2.2 0 0 1 2.6 -2.2" fill="none" stroke="#d2d2d2" stroke-width="1.5"/><path d="M2 2.4 L16 19.6" stroke="#535353" stroke-width="3.4"/><path d="M2 2.4 L16 19.6" stroke="#d2d2d2" stroke-width="1.2"/></svg>
<svg style="left:1372px;top:229px;" width="13" height="11" viewBox="0 0 13 11"><path d="M1.6 9 H10.4 L8.4 2 Z" fill="none" stroke="#d2d2d2" stroke-width="1.2" stroke-linejoin="round"/></svg>
<span style="left:1384px;top:228.70px;font:11px/15px 'Liberation Mono','Noto Sans CJK SC',monospace;color:#b4b4b4;white-space:pre;letter-spacing:-0.8px;">:</span>
<div style="left:1391.5px;top:224.5px;width:55.5px;height:20px;background:#444444;box-sizing:border-box;border:1px solid #626262;border-radius:3px;"></div>
<div style="left:1428.5px;top:225.5px;width:17.5px;height:18px;background:#4d4d4d;"></div>
<div style="left:1428.5px;top:225.5px;width:1px;height:18px;background:#626262;"></div>
<span style="left:1394.5px;top:226.60px;font:12px/16px 'Liberation Mono','Noto Sans CJK SC',monospace;color:#f2f2f2;white-space:pre;letter-spacing:-1.2px;">0°</span>
<svg style="left:1432.9px;top:231.6px;" width="9.2" height="7.2" viewBox="0 0 9.2 7.2"><path d="M1 1.80 L4.6 5.40 L8.2 1.80" fill="none" stroke="#e6e6e6" stroke-width="1.6"/></svg>
<svg style="left:1487px;top:228px;" width="16" height="15" viewBox="0 0 16 15"><path d="M1.6 3 L6 7.5 L1.6 12 Z" fill="none" stroke="#d2d2d2" stroke-width="1"/><path d="M14 2.6 L9.2 7.5 L14 12.4 Z" fill="#d2d2d2"/><path d="M7.7 0.6 V14.4" stroke="#d2d2d2" stroke-width="1" stroke-dasharray="1 1"/></svg>
<svg style="left:1517px;top:228px;" width="14" height="15" viewBox="0 0 14 15"><path d="M2.6 1 L7 5.8 L11.4 1 Z" fill="#d2d2d2"/><path d="M3 13.4 L7 9 L11 13.4 Z" fill="none" stroke="#d2d2d2" stroke-width="1"/><path d="M0.4 7.5 H13.6" stroke="#d2d2d2" stroke-width="1" stroke-dasharray="1 1"/></svg>
<svg style="left:1557px;top:256px;" width="16" height="4" viewBox="0 0 16 4"><circle cx="2.0" cy="2" r="1.8" fill="#c4c4c4"/><circle cx="7.4" cy="2" r="1.8" fill="#c4c4c4"/><circle cx="12.8" cy="2" r="1.8" fill="#c4c4c4"/></svg>
<div style="left:1336px;top:271px;width:248px;height:2px;background:#4c4c4c;"></div>
<span style="left:1345px;top:280.50px;font:10px/14px 'Liberation Sans','Noto Sans CJK SC',sans-serif;color:#c4c4c4;white-space:pre;">外观</span>
<div style="left:1345.5px;top:304px;width:17px;height:17px;background:#d9cbc1;box-sizing:border-box;border:1px solid #f7f3f0;"></div>
<span style="left:1375px;top:305.50px;font:10px/14px 'Liberation Sans','Noto Sans CJK SC',sans-serif;color:#c4c4c4;white-space:pre;">填色</span>
<div style="left:1345.5px;top:333px;width:17px;height:17px;background:#000;box-sizing:border-box;border:1px solid #f2f2f2;"></div>
<div style="left:1350px;top:337.5px;width:8px;height:8px;background:#3d3d3d;box-sizing:border-box;border:1.2px solid #fff;"></div>
<span style="left:1375px;top:334.50px;font:10px/14px 'Liberation Sans','Noto Sans CJK SC',sans-serif;color:#e4e4e4;white-space:pre;">描边</span>
<div style="left:1375px;top:348px;width:21px;height:1px;background:repeating-linear-gradient(90deg,#d8d8d8 0 1px,transparent 1px 2px);"></div>
<div style="left:1424px;top:331px;width:70px;height:21px;background:#4e4e4e;box-sizing:border-box;border:1px solid #5e5e5e;border-radius:3px;"></div>
<div style="left:1442px;top:332px;width:33px;height:19px;background:#444444;"></div>
<div style="left:1441px;top:332px;width:1px;height:19px;background:#5e5e5e;"></div>
<div style="left:1475px;top:332px;width:1px;height:19px;background:#5e5e5e;"></div>
<svg style="left:1427.7px;top:333.0px;" width="9.6" height="7.6" viewBox="0 0 9.6 7.6"><path d="M1 5.70 L4.8 1.90 L8.6 5.70" fill="none" stroke="#e6e6e6" stroke-width="1.4"/></svg>
<svg style="left:1427.7px;top:342.4px;" width="9.6" height="7.6" viewBox="0 0 9.6 7.6"><path d="M1 1.90 L4.8 5.70 L8.6 1.90" fill="none" stroke="#e6e6e6" stroke-width="1.4"/></svg>
<span style="left:1446px;top:332.50px;font:12px/16px 'Liberation Mono','Noto Sans CJK SC',monospace;color:#f2f2f2;white-space:pre;letter-spacing:-1.2px;">1 pt</span>
<svg style="left:1480.2px;top:338.2px;" width="8.6" height="6.6" viewBox="0 0 8.6 6.6"><path d="M1 1.65 L4.3 4.95 L7.6 1.65" fill="none" stroke="#e6e6e6" stroke-width="1.6"/></svg>
<svg style="left:1345px;top:362px;" width="17" height="17" viewBox="0 0 17 17"><rect x="0.5" y="0.5" width="16" height="16" fill="#8f8f8f" stroke="#a8a8a8" stroke-width="1"/><rect x="1.0" y="1.0" width="3.75" height="3.75" fill="#626262"/><rect x="1.0" y="8.5" width="3.75" height="3.75" fill="#626262"/><rect x="4.75" y="4.75" width="3.75" height="3.75" fill="#626262"/><rect x="4.75" y="12.25" width="3.75" height="3.75" fill="#626262"/><rect x="8.5" y="1.0" width="3.75" height="3.75" fill="#626262"/><rect x="8.5" y="8.5" width="3.75" height="3.75" fill="#626262"/><rect x="12.25" y="4.75" width="3.75" height="3.75" fill="#626262"/><rect x="12.25" y="12.25" width="3.75" height="3.75" fill="#626262"/></svg>
<span style="left:1375px;top:363.50px;font:10px/14px 'Liberation Sans','Noto Sans CJK SC',sans-serif;color:#e4e4e4;white-space:pre;">不透明度</span>
<div style="left:1375px;top:377px;width:41px;height:1px;background:repeating-linear-gradient(90deg,#d8d8d8 0 1px,transparent 1px 2px);"></div>
<div style="left:1424px;top:360px;width:70px;height:21px;background:#444444;box-sizing:border-box;border:1px solid #5e5e5e;border-radius:3px;"></div>
<div style="left:1475px;top:361px;width:18px;height:19px;background:#4e4e4e;"></div>
<div style="left:1475px;top:361px;width:1px;height:19px;background:#5e5e5e;"></div>
<span style="left:1427.5px;top:361.50px;font:12px/16px 'Liberation Mono','Noto Sans CJK SC',monospace;color:#f2f2f2;white-space:pre;letter-spacing:-1.2px;">100%</span>
<svg style="left:1481.2px;top:366.2px;" width="6.6" height="8.6" viewBox="0 0 6.6 8.6"><path d="M1.65 1 L4.95 4.3 L1.65 7.6" fill="none" stroke="#e6e6e6" stroke-width="1.6"/></svg>
<span style="left:1350.5px;top:390.00px;font:14px/18px 'Liberation Sans','Noto Sans CJK SC',sans-serif;color:#b0b0b0;white-space:pre;font-style:italic;letter-spacing:-0.5px;">fx</span>
<svg style="left:1362px;top:403.5px;" width="4" height="3" viewBox="0 0 4 3"><path d="M0 0 H3.6 L1.8 2.4 Z" fill="#b4b4b4"/></svg>
<svg style="left:1557px;top:421px;" width="16" height="4" viewBox="0 0 16 4"><circle cx="2.0" cy="2" r="1.8" fill="#c4c4c4"/><circle cx="7.4" cy="2" r="1.8" fill="#c4c4c4"/><circle cx="12.8" cy="2" r="1.8" fill="#c4c4c4"/></svg>
<div style="left:1336px;top:434.5px;width:248px;height:2px;background:#4c4c4c;"></div>
<span style="left:1345px;top:449.50px;font:10px/14px 'Liberation Sans','Noto Sans CJK SC',sans-serif;color:#c4c4c4;white-space:pre;">快速操作</span>
<div style="left:1345px;top:471px;width:100px;height:21px;background:transparent;box-sizing:border-box;border:1px solid #747474;border-radius:3px;"></div>
<span style="left:1345px;top:475.80px;font:10px/14px 'Liberation Sans','Noto Sans CJK SC',sans-serif;color:#f0f0f0;white-space:pre;width:100px;text-align:center;font-weight:bold;">位移路径</span>
<div style="left:1455px;top:471px;width:100px;height:21px;background:transparent;box-sizing:border-box;border:1px solid #747474;border-radius:3px;"></div>
<span style="left:1455px;top:475.80px;font:10px/14px 'Liberation Sans','Noto Sans CJK SC',sans-serif;color:#f0f0f0;white-space:pre;width:100px;text-align:center;font-weight:bold;">扩展形状</span>
<div style="left:1345px;top:502px;width:100px;height:21px;background:transparent;box-sizing:border-box;border:1px solid #747474;border-radius:3px;"></div>
<span style="left:1345px;top:506.80px;font:10px/14px 'Liberation Sans','Noto Sans CJK SC',sans-serif;color:#f0f0f0;white-space:pre;width:100px;text-align:center;font-weight:bold;">排列</span>
<div style="left:1455px;top:502px;width:100px;height:21px;background:transparent;box-sizing:border-box;border:1px solid #747474;border-radius:3px;"></div>
<span style="left:1455px;top:506.80px;font:10px/14px 'Liberation Sans','Noto Sans CJK SC',sans-serif;color:#f0f0f0;white-space:pre;width:100px;text-align:center;font-weight:bold;">对齐像素网格</span>
<div style="left:1345px;top:533px;width:210px;height:21px;background:transparent;box-sizing:border-box;border:1px solid #747474;border-radius:3px;"></div>
<span style="left:1345px;top:537.80px;font:10px/14px 'Liberation Sans','Noto Sans CJK SC',sans-serif;color:#f0f0f0;white-space:pre;width:210px;text-align:center;font-weight:bold;">重新着色</span>
<div style="left:1052px;top:410px;width:241px;height:223.5px;background:#3a3a3a;"></div>
<div style="left:1053px;top:414px;width:239px;height:212px;background:#535353;"></div>
<div style="left:1053px;top:414px;width:239px;height:26px;background:#424242;"></div>
<div style="left:1053px;top:414px;width:42px;height:27px;background:#535353;"></div>
<div style="left:1095px;top:414px;width:1px;height:26px;background:#3a3a3a;"></div>
<div style="left:1096px;top:414px;width:64px;height:26px;background:#484848;"></div>
<div style="left:1160px;top:414px;width:1px;height:26px;background:#3a3a3a;"></div>
<div style="left:1161px;top:414px;width:42px;height:26px;background:#484848;"></div>
<div style="left:1203px;top:414px;width:1px;height:26px;background:#3a3a3a;"></div>
<div style="left:1095px;top:440px;width:197px;height:1px;background:#3c3c3c;"></div>
<span style="left:1062px;top:419.50px;font:12px/16px 'Liberation Sans','Noto Sans CJK SC',sans-serif;color:#f4f4f4;white-space:pre;">图层</span>
<span style="left:1104px;top:419.50px;font:12px/16px 'Liberation Sans','Noto Sans CJK SC',sans-serif;color:#a8a8a8;white-space:pre;">资源导出</span>
<span style="left:1170px;top:419.50px;font:12px/16px 'Liberation Sans','Noto Sans CJK SC',sans-serif;color:#a8a8a8;white-space:pre;">画板</span>
<svg style="left:1252px;top:423.5px;" width="10" height="7" viewBox="0 0 10 7"><path d="M1 0.6 L4 3.5 L1 6.4 M5.6 0.6 L8.6 3.5 L5.6 6.4" fill="none" stroke="#e4e4e4" stroke-width="1.3"/></svg>
<div style="left:1269px;top:422px;width:1px;height:11px;background:#9a9a9a;"></div>
<svg style="left:1277px;top:424px;" width="11" height="8" viewBox="0 0 11 8"><path d="M0 0.6 H10.4 M0 2.9 H10.4 M0 5.2 H10.4 M0 7.5 H10.4" stroke="#c8c8c8" stroke-width="0.9"/></svg>
<div style="left:1057.5px;top:446.5px;width:230px;height:160px;background:#535353;box-sizing:border-box;border:1px solid #494949;"></div>
<div style="left:1058px;top:447.6px;width:229px;height:20.4px;background:#4f6580;"></div>
<div style="left:1079px;top:447.6px;width:1px;height:20.4px;background:#5a6e88;"></div>
<div style="left:1100px;top:447.6px;width:1px;height:20.4px;background:#5a6e88;"></div>
<div style="left:1251px;top:447.6px;width:1px;height:20.4px;background:#5a6e88;"></div>
<svg style="left:1062px;top:452.6px;" width="14" height="10" viewBox="0 0 14 10"><path d="M0.4 5 C3 0.6 11 0.6 13.6 5 C11 9.4 3 9.4 0.4 5 Z" fill="#d2d2d2"/><circle cx="7" cy="4.8" r="2.6" fill="#4f6580"/><circle cx="7" cy="4.8" r="1.4" fill="#d2d2d2"/></svg>
<div style="left:1102px;top:448.5px;width:3.5px;height:19px;background:#4f7dff;"></div>
<svg style="left:1112.3px;top:453.40000000000003px;" width="6.4" height="8.4" viewBox="0 0 6.4 8.4"><path d="M1.60 1 L4.80 4.2 L1.60 7.4" fill="none" stroke="#f0f0f0" stroke-width="1.5"/></svg>
<div style="left:1131px;top:449.5px;width:18px;height:17.5px;background:#fff;box-sizing:border-box;border:1px solid #000;"></div>
<div style="left:1139px;top:450.5px;width:1.6px;height:15.5px;background:#b8b0ab;"></div>
<span style="left:1155px;top:450.00px;font:12px/16px 'Liberation Sans','Noto Sans CJK SC',sans-serif;color:#f0f0f0;white-space:pre;word-spacing:2px;">图层 1</span>
<svg style="left:1257px;top:453px;" width="10" height="10" viewBox="0 0 10 10"><circle cx="5" cy="5" r="3.6" fill="none" stroke="#d4d4d4" stroke-width="1.1"/></svg>
<div style="left:1272px;top:455px;width:6px;height:6px;background:#4f7dff;box-sizing:border-box;border:1px solid #000;"></div>
<svg style="left:1281px;top:447.6px;" width="6" height="6" viewBox="0 0 6 6"><path d="M0 0 H6 V6 Z" fill="#d8d8d8"/></svg>
<span style="left:1058px;top:608.50px;font:11px/15px 'Liberation Sans','Noto Sans CJK SC',sans-serif;color:#d0d0d0;white-space:pre;">1</span>
<span style="left:1070px;top:608.00px;font:12px/16px 'Liberation Sans','Noto Sans CJK SC',sans-serif;color:#d0d0d0;white-space:pre;">个图层</span>
<svg style="left:1123px;top:609px;" width="14" height="13" viewBox="0 0 14 13"><path d="M5.4 2.4 H1.4 V11.6 H10.6 V7.6" fill="none" stroke="#d0d0d0" stroke-width="1.1"/><path d="M6 7 L11.6 1.4 M7.6 1 H12 V5.4" fill="none" stroke="#d0d0d0" stroke-width="1.1"/></svg>
<svg style="left:1149px;top:609px;" width="13" height="13" viewBox="0 0 13 13"><circle cx="7.6" cy="5" r="3.6" fill="none" stroke="#d0d0d0" stroke-width="1.3"/><path d="M5 7.8 L1 11.8" stroke="#d0d0d0" stroke-width="1.7"/></svg>
<svg style="left:1175px;top:609px;" width="13" height="13" viewBox="0 0 13 13"><rect x="1" y="1.4" width="7.6" height="7.6" fill="none" stroke="#d0d0d0" stroke-width="1.1"/><rect x="4.6" y="4.6" width="6.6" height="6.6" fill="#8a8a8a" stroke="#d0d0d0" stroke-width="1.1"/></svg>
<svg style="left:1200px;top:609px;" width="15" height="13" viewBox="0 0 15 13"><path d="M1 1.4 V5.6 H5.6" fill="none" stroke="#d0d0d0" stroke-width="1.2"/><path d="M4.6 3.4 L7.6 5.6 L4.6 7.8 Z" fill="#d0d0d0"/><path d="M7 2 H13.6 V11 H9.4 V7 H7 Z" fill="#d0d0d0"/></svg>
<svg style="left:1228px;top:609px;" width="12" height="13" viewBox="0 0 12 13"><path d="M1 2 H10.6 V11 H5 V7.4 H1 Z" fill="#d0d0d0"/></svg>
<svg style="left:1254px;top:608px;" width="12" height="14" viewBox="0 0 12 14"><path d="M1 3.4 H10.6 M4 3.2 V1.4 H7.6 V3.2 M2 3.6 L2.6 12.6 H9 L9.6 3.6 M4.4 5.4 V10.8 M5.8 5.4 V10.8 M7.2 5.4 V10.8" fill="none" stroke="#6a6a6a" stroke-width="1"/></svg>
<div style="left:1053px;top:624.5px;width:239px;height:2px;background:#3a3a3a;"></div>
<div style="left:1053px;top:626.5px;width:239px;height:6px;background:#4e4e4e;"></div>
<svg style="left:1163px;top:627.5px;" width="20" height="4" viewBox="0 0 20 4"><rect x="0" y="0" width="1" height="4" fill="#363636"/><rect x="2" y="0" width="1" height="4" fill="#363636"/><rect x="4" y="0" width="1" height="4" fill="#363636"/><rect x="6" y="0" width="1" height="4" fill="#363636"/><rect x="8" y="0" width="1" height="4" fill="#363636"/><rect x="10" y="0" width="1" height="4" fill="#363636"/><rect x="12" y="0" width="1" height="4" fill="#363636"/><rect x="14" y="0" width="1" height="4" fill="#363636"/><rect x="16" y="0" width="1" height="4" fill="#363636"/><rect x="18" y="0" width="1" height="4" fill="#363636"/></svg>
<svg style="left:1474px;top:784.5px;" width="52" height="52" viewBox="0 0 52 52"><circle cx="26" cy="26" r="23.7" fill="#fff" stroke="#2186f2" stroke-width="2.2"/><circle cx="26" cy="26" r="21.6" fill="none" stroke="#161616" stroke-width="1.1"/><path d="M22 23.2 C23.4 21.7 28.6 21.7 30 23.2 C30.6 26.4 30.2 30.6 28.4 32.6 C27.1 34 24.9 34 23.6 32.6 C21.8 30.6 21.4 26.4 22 23.2 Z" fill="#0a0a0a"/><path d="M22.6 23.2 L18.8 18.6 L14.6 17.6 M18.8 18.6 L16.6 12.8 M20.6 20.6 L20.4 14.8 M29.4 23.2 L33.2 18.6 L37.4 17.6 M33.2 18.6 L35.4 12.8 M31.4 20.6 L31.6 14.8 M22.8 22.8 L20.4 21.4 M29.2 22.8 L31.6 21.4" fill="none" stroke="#0a0a0a" stroke-width="1.7" stroke-linecap="round"/><text x="26" y="41" text-anchor="middle" font-family="Liberation Serif,Noto Serif CJK SC,serif" font-size="6.8" font-weight="900" font-style="italic" fill="#111">行鹿客</text></svg>
<div style="left:94px;top:32px;width:230px;height:43px;background:transparent;box-sizing:border-box;border:2.5px solid #f10d0d;"></div>
<svg style="left:210px;top:105px;" width="60" height="80" viewBox="0 0 60 80"><path d="M49.5 72 L12.5 14" stroke="#ee1111" stroke-width="2.6"/><path d="M8 7 L20.5 13.5 L11.5 19.8 Z" fill="#ee1111"/></svg>
</div></body></html>
